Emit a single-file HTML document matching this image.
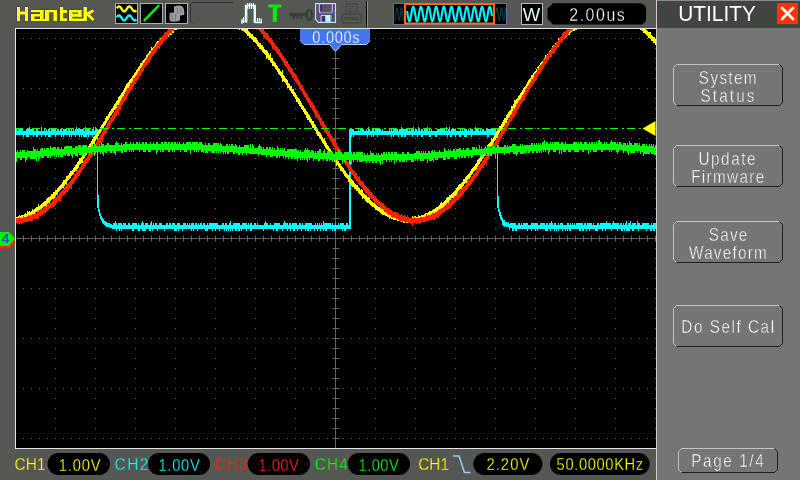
<!DOCTYPE html>
<html><head><meta charset="utf-8">
<style>
html,body{margin:0;padding:0;background:#555753;}
body{width:800px;height:480px;overflow:hidden;position:relative;font-family:"Liberation Sans",sans-serif;}
svg{position:absolute;left:0;top:0;display:block;will-change:transform;}
text{font-family:"Liberation Sans",sans-serif;}
</style></head>
<body>
<svg width="800" height="480" viewBox="0 0 800 480">
<defs>
<clipPath id="cl"><rect x="16" y="29" width="640" height="419"/></clipPath>
<filter id="blur1" x="-30%" y="-30%" width="160%" height="160%"><feGaussianBlur stdDeviation="0.7"/></filter>
</defs>
<rect x="0" y="0" width="800" height="480" fill="#555753"/>
<g shape-rendering="crispEdges">
<rect x="15" y="28" width="641" height="421" fill="#e4e4e4"/>
<rect x="16" y="29" width="640" height="419" fill="#000"/>
</g>
<g clip-path="url(#cl)">
<path d="M23 38h1v1h-1zM23 88h1v1h-1zM23 138h1v1h-1zM23 188h1v1h-1zM23 288h1v1h-1zM23 338h1v1h-1zM23 388h1v1h-1zM23 438h1v1h-1zM31 38h1v1h-1zM31 88h1v1h-1zM31 138h1v1h-1zM31 188h1v1h-1zM31 288h1v1h-1zM31 338h1v1h-1zM31 388h1v1h-1zM31 438h1v1h-1zM39 38h1v1h-1zM39 88h1v1h-1zM39 138h1v1h-1zM39 188h1v1h-1zM39 288h1v1h-1zM39 338h1v1h-1zM39 388h1v1h-1zM39 438h1v1h-1zM47 38h1v1h-1zM47 88h1v1h-1zM47 138h1v1h-1zM47 188h1v1h-1zM47 288h1v1h-1zM47 338h1v1h-1zM47 388h1v1h-1zM47 438h1v1h-1zM55 38h1v1h-1zM55 48h1v1h-1zM55 58h1v1h-1zM55 68h1v1h-1zM55 78h1v1h-1zM55 88h1v1h-1zM55 98h1v1h-1zM55 108h1v1h-1zM55 118h1v1h-1zM55 128h1v1h-1zM55 138h1v1h-1zM55 148h1v1h-1zM55 158h1v1h-1zM55 168h1v1h-1zM55 178h1v1h-1zM55 188h1v1h-1zM55 198h1v1h-1zM55 208h1v1h-1zM55 218h1v1h-1zM55 228h1v1h-1zM55 238h1v1h-1zM55 248h1v1h-1zM55 258h1v1h-1zM55 268h1v1h-1zM55 278h1v1h-1zM55 288h1v1h-1zM55 298h1v1h-1zM55 308h1v1h-1zM55 318h1v1h-1zM55 328h1v1h-1zM55 338h1v1h-1zM55 348h1v1h-1zM55 358h1v1h-1zM55 368h1v1h-1zM55 378h1v1h-1zM55 388h1v1h-1zM55 398h1v1h-1zM55 408h1v1h-1zM55 418h1v1h-1zM55 428h1v1h-1zM55 438h1v1h-1zM63 38h1v1h-1zM63 88h1v1h-1zM63 138h1v1h-1zM63 188h1v1h-1zM63 288h1v1h-1zM63 338h1v1h-1zM63 388h1v1h-1zM63 438h1v1h-1zM71 38h1v1h-1zM71 88h1v1h-1zM71 138h1v1h-1zM71 188h1v1h-1zM71 288h1v1h-1zM71 338h1v1h-1zM71 388h1v1h-1zM71 438h1v1h-1zM79 38h1v1h-1zM79 88h1v1h-1zM79 138h1v1h-1zM79 188h1v1h-1zM79 288h1v1h-1zM79 338h1v1h-1zM79 388h1v1h-1zM79 438h1v1h-1zM87 38h1v1h-1zM87 88h1v1h-1zM87 138h1v1h-1zM87 188h1v1h-1zM87 288h1v1h-1zM87 338h1v1h-1zM87 388h1v1h-1zM87 438h1v1h-1zM95 38h1v1h-1zM95 48h1v1h-1zM95 58h1v1h-1zM95 68h1v1h-1zM95 78h1v1h-1zM95 88h1v1h-1zM95 98h1v1h-1zM95 108h1v1h-1zM95 118h1v1h-1zM95 128h1v1h-1zM95 138h1v1h-1zM95 148h1v1h-1zM95 158h1v1h-1zM95 168h1v1h-1zM95 178h1v1h-1zM95 188h1v1h-1zM95 198h1v1h-1zM95 208h1v1h-1zM95 218h1v1h-1zM95 228h1v1h-1zM95 238h1v1h-1zM95 248h1v1h-1zM95 258h1v1h-1zM95 268h1v1h-1zM95 278h1v1h-1zM95 288h1v1h-1zM95 298h1v1h-1zM95 308h1v1h-1zM95 318h1v1h-1zM95 328h1v1h-1zM95 338h1v1h-1zM95 348h1v1h-1zM95 358h1v1h-1zM95 368h1v1h-1zM95 378h1v1h-1zM95 388h1v1h-1zM95 398h1v1h-1zM95 408h1v1h-1zM95 418h1v1h-1zM95 428h1v1h-1zM95 438h1v1h-1zM103 38h1v1h-1zM103 88h1v1h-1zM103 138h1v1h-1zM103 188h1v1h-1zM103 288h1v1h-1zM103 338h1v1h-1zM103 388h1v1h-1zM103 438h1v1h-1zM111 38h1v1h-1zM111 88h1v1h-1zM111 138h1v1h-1zM111 188h1v1h-1zM111 288h1v1h-1zM111 338h1v1h-1zM111 388h1v1h-1zM111 438h1v1h-1zM119 38h1v1h-1zM119 88h1v1h-1zM119 138h1v1h-1zM119 188h1v1h-1zM119 288h1v1h-1zM119 338h1v1h-1zM119 388h1v1h-1zM119 438h1v1h-1zM127 38h1v1h-1zM127 88h1v1h-1zM127 138h1v1h-1zM127 188h1v1h-1zM127 288h1v1h-1zM127 338h1v1h-1zM127 388h1v1h-1zM127 438h1v1h-1zM135 38h1v1h-1zM135 48h1v1h-1zM135 58h1v1h-1zM135 68h1v1h-1zM135 78h1v1h-1zM135 88h1v1h-1zM135 98h1v1h-1zM135 108h1v1h-1zM135 118h1v1h-1zM135 128h1v1h-1zM135 138h1v1h-1zM135 148h1v1h-1zM135 158h1v1h-1zM135 168h1v1h-1zM135 178h1v1h-1zM135 188h1v1h-1zM135 198h1v1h-1zM135 208h1v1h-1zM135 218h1v1h-1zM135 228h1v1h-1zM135 238h1v1h-1zM135 248h1v1h-1zM135 258h1v1h-1zM135 268h1v1h-1zM135 278h1v1h-1zM135 288h1v1h-1zM135 298h1v1h-1zM135 308h1v1h-1zM135 318h1v1h-1zM135 328h1v1h-1zM135 338h1v1h-1zM135 348h1v1h-1zM135 358h1v1h-1zM135 368h1v1h-1zM135 378h1v1h-1zM135 388h1v1h-1zM135 398h1v1h-1zM135 408h1v1h-1zM135 418h1v1h-1zM135 428h1v1h-1zM135 438h1v1h-1zM143 38h1v1h-1zM143 88h1v1h-1zM143 138h1v1h-1zM143 188h1v1h-1zM143 288h1v1h-1zM143 338h1v1h-1zM143 388h1v1h-1zM143 438h1v1h-1zM151 38h1v1h-1zM151 88h1v1h-1zM151 138h1v1h-1zM151 188h1v1h-1zM151 288h1v1h-1zM151 338h1v1h-1zM151 388h1v1h-1zM151 438h1v1h-1zM159 38h1v1h-1zM159 88h1v1h-1zM159 138h1v1h-1zM159 188h1v1h-1zM159 288h1v1h-1zM159 338h1v1h-1zM159 388h1v1h-1zM159 438h1v1h-1zM167 38h1v1h-1zM167 88h1v1h-1zM167 138h1v1h-1zM167 188h1v1h-1zM167 288h1v1h-1zM167 338h1v1h-1zM167 388h1v1h-1zM167 438h1v1h-1zM175 38h1v1h-1zM175 48h1v1h-1zM175 58h1v1h-1zM175 68h1v1h-1zM175 78h1v1h-1zM175 88h1v1h-1zM175 98h1v1h-1zM175 108h1v1h-1zM175 118h1v1h-1zM175 128h1v1h-1zM175 138h1v1h-1zM175 148h1v1h-1zM175 158h1v1h-1zM175 168h1v1h-1zM175 178h1v1h-1zM175 188h1v1h-1zM175 198h1v1h-1zM175 208h1v1h-1zM175 218h1v1h-1zM175 228h1v1h-1zM175 238h1v1h-1zM175 248h1v1h-1zM175 258h1v1h-1zM175 268h1v1h-1zM175 278h1v1h-1zM175 288h1v1h-1zM175 298h1v1h-1zM175 308h1v1h-1zM175 318h1v1h-1zM175 328h1v1h-1zM175 338h1v1h-1zM175 348h1v1h-1zM175 358h1v1h-1zM175 368h1v1h-1zM175 378h1v1h-1zM175 388h1v1h-1zM175 398h1v1h-1zM175 408h1v1h-1zM175 418h1v1h-1zM175 428h1v1h-1zM175 438h1v1h-1zM183 38h1v1h-1zM183 88h1v1h-1zM183 138h1v1h-1zM183 188h1v1h-1zM183 288h1v1h-1zM183 338h1v1h-1zM183 388h1v1h-1zM183 438h1v1h-1zM191 38h1v1h-1zM191 88h1v1h-1zM191 138h1v1h-1zM191 188h1v1h-1zM191 288h1v1h-1zM191 338h1v1h-1zM191 388h1v1h-1zM191 438h1v1h-1zM199 38h1v1h-1zM199 88h1v1h-1zM199 138h1v1h-1zM199 188h1v1h-1zM199 288h1v1h-1zM199 338h1v1h-1zM199 388h1v1h-1zM199 438h1v1h-1zM207 38h1v1h-1zM207 88h1v1h-1zM207 138h1v1h-1zM207 188h1v1h-1zM207 288h1v1h-1zM207 338h1v1h-1zM207 388h1v1h-1zM207 438h1v1h-1zM215 38h1v1h-1zM215 48h1v1h-1zM215 58h1v1h-1zM215 68h1v1h-1zM215 78h1v1h-1zM215 88h1v1h-1zM215 98h1v1h-1zM215 108h1v1h-1zM215 118h1v1h-1zM215 128h1v1h-1zM215 138h1v1h-1zM215 148h1v1h-1zM215 158h1v1h-1zM215 168h1v1h-1zM215 178h1v1h-1zM215 188h1v1h-1zM215 198h1v1h-1zM215 208h1v1h-1zM215 218h1v1h-1zM215 228h1v1h-1zM215 238h1v1h-1zM215 248h1v1h-1zM215 258h1v1h-1zM215 268h1v1h-1zM215 278h1v1h-1zM215 288h1v1h-1zM215 298h1v1h-1zM215 308h1v1h-1zM215 318h1v1h-1zM215 328h1v1h-1zM215 338h1v1h-1zM215 348h1v1h-1zM215 358h1v1h-1zM215 368h1v1h-1zM215 378h1v1h-1zM215 388h1v1h-1zM215 398h1v1h-1zM215 408h1v1h-1zM215 418h1v1h-1zM215 428h1v1h-1zM215 438h1v1h-1zM223 38h1v1h-1zM223 88h1v1h-1zM223 138h1v1h-1zM223 188h1v1h-1zM223 288h1v1h-1zM223 338h1v1h-1zM223 388h1v1h-1zM223 438h1v1h-1zM231 38h1v1h-1zM231 88h1v1h-1zM231 138h1v1h-1zM231 188h1v1h-1zM231 288h1v1h-1zM231 338h1v1h-1zM231 388h1v1h-1zM231 438h1v1h-1zM239 38h1v1h-1zM239 88h1v1h-1zM239 138h1v1h-1zM239 188h1v1h-1zM239 288h1v1h-1zM239 338h1v1h-1zM239 388h1v1h-1zM239 438h1v1h-1zM247 38h1v1h-1zM247 88h1v1h-1zM247 138h1v1h-1zM247 188h1v1h-1zM247 288h1v1h-1zM247 338h1v1h-1zM247 388h1v1h-1zM247 438h1v1h-1zM255 38h1v1h-1zM255 48h1v1h-1zM255 58h1v1h-1zM255 68h1v1h-1zM255 78h1v1h-1zM255 88h1v1h-1zM255 98h1v1h-1zM255 108h1v1h-1zM255 118h1v1h-1zM255 128h1v1h-1zM255 138h1v1h-1zM255 148h1v1h-1zM255 158h1v1h-1zM255 168h1v1h-1zM255 178h1v1h-1zM255 188h1v1h-1zM255 198h1v1h-1zM255 208h1v1h-1zM255 218h1v1h-1zM255 228h1v1h-1zM255 238h1v1h-1zM255 248h1v1h-1zM255 258h1v1h-1zM255 268h1v1h-1zM255 278h1v1h-1zM255 288h1v1h-1zM255 298h1v1h-1zM255 308h1v1h-1zM255 318h1v1h-1zM255 328h1v1h-1zM255 338h1v1h-1zM255 348h1v1h-1zM255 358h1v1h-1zM255 368h1v1h-1zM255 378h1v1h-1zM255 388h1v1h-1zM255 398h1v1h-1zM255 408h1v1h-1zM255 418h1v1h-1zM255 428h1v1h-1zM255 438h1v1h-1zM263 38h1v1h-1zM263 88h1v1h-1zM263 138h1v1h-1zM263 188h1v1h-1zM263 288h1v1h-1zM263 338h1v1h-1zM263 388h1v1h-1zM263 438h1v1h-1zM271 38h1v1h-1zM271 88h1v1h-1zM271 138h1v1h-1zM271 188h1v1h-1zM271 288h1v1h-1zM271 338h1v1h-1zM271 388h1v1h-1zM271 438h1v1h-1zM279 38h1v1h-1zM279 88h1v1h-1zM279 138h1v1h-1zM279 188h1v1h-1zM279 288h1v1h-1zM279 338h1v1h-1zM279 388h1v1h-1zM279 438h1v1h-1zM287 38h1v1h-1zM287 88h1v1h-1zM287 138h1v1h-1zM287 188h1v1h-1zM287 288h1v1h-1zM287 338h1v1h-1zM287 388h1v1h-1zM287 438h1v1h-1zM295 38h1v1h-1zM295 48h1v1h-1zM295 58h1v1h-1zM295 68h1v1h-1zM295 78h1v1h-1zM295 88h1v1h-1zM295 98h1v1h-1zM295 108h1v1h-1zM295 118h1v1h-1zM295 128h1v1h-1zM295 138h1v1h-1zM295 148h1v1h-1zM295 158h1v1h-1zM295 168h1v1h-1zM295 178h1v1h-1zM295 188h1v1h-1zM295 198h1v1h-1zM295 208h1v1h-1zM295 218h1v1h-1zM295 228h1v1h-1zM295 238h1v1h-1zM295 248h1v1h-1zM295 258h1v1h-1zM295 268h1v1h-1zM295 278h1v1h-1zM295 288h1v1h-1zM295 298h1v1h-1zM295 308h1v1h-1zM295 318h1v1h-1zM295 328h1v1h-1zM295 338h1v1h-1zM295 348h1v1h-1zM295 358h1v1h-1zM295 368h1v1h-1zM295 378h1v1h-1zM295 388h1v1h-1zM295 398h1v1h-1zM295 408h1v1h-1zM295 418h1v1h-1zM295 428h1v1h-1zM295 438h1v1h-1zM303 38h1v1h-1zM303 88h1v1h-1zM303 138h1v1h-1zM303 188h1v1h-1zM303 288h1v1h-1zM303 338h1v1h-1zM303 388h1v1h-1zM303 438h1v1h-1zM311 38h1v1h-1zM311 88h1v1h-1zM311 138h1v1h-1zM311 188h1v1h-1zM311 288h1v1h-1zM311 338h1v1h-1zM311 388h1v1h-1zM311 438h1v1h-1zM319 38h1v1h-1zM319 88h1v1h-1zM319 138h1v1h-1zM319 188h1v1h-1zM319 288h1v1h-1zM319 338h1v1h-1zM319 388h1v1h-1zM319 438h1v1h-1zM327 38h1v1h-1zM327 88h1v1h-1zM327 138h1v1h-1zM327 188h1v1h-1zM327 288h1v1h-1zM327 338h1v1h-1zM327 388h1v1h-1zM327 438h1v1h-1zM335 38h1v1h-1zM335 88h1v1h-1zM335 138h1v1h-1zM335 188h1v1h-1zM335 288h1v1h-1zM335 338h1v1h-1zM335 388h1v1h-1zM335 438h1v1h-1zM343 38h1v1h-1zM343 88h1v1h-1zM343 138h1v1h-1zM343 188h1v1h-1zM343 288h1v1h-1zM343 338h1v1h-1zM343 388h1v1h-1zM343 438h1v1h-1zM351 38h1v1h-1zM351 88h1v1h-1zM351 138h1v1h-1zM351 188h1v1h-1zM351 288h1v1h-1zM351 338h1v1h-1zM351 388h1v1h-1zM351 438h1v1h-1zM359 38h1v1h-1zM359 88h1v1h-1zM359 138h1v1h-1zM359 188h1v1h-1zM359 288h1v1h-1zM359 338h1v1h-1zM359 388h1v1h-1zM359 438h1v1h-1zM367 38h1v1h-1zM367 88h1v1h-1zM367 138h1v1h-1zM367 188h1v1h-1zM367 288h1v1h-1zM367 338h1v1h-1zM367 388h1v1h-1zM367 438h1v1h-1zM375 38h1v1h-1zM375 48h1v1h-1zM375 58h1v1h-1zM375 68h1v1h-1zM375 78h1v1h-1zM375 88h1v1h-1zM375 98h1v1h-1zM375 108h1v1h-1zM375 118h1v1h-1zM375 128h1v1h-1zM375 138h1v1h-1zM375 148h1v1h-1zM375 158h1v1h-1zM375 168h1v1h-1zM375 178h1v1h-1zM375 188h1v1h-1zM375 198h1v1h-1zM375 208h1v1h-1zM375 218h1v1h-1zM375 228h1v1h-1zM375 238h1v1h-1zM375 248h1v1h-1zM375 258h1v1h-1zM375 268h1v1h-1zM375 278h1v1h-1zM375 288h1v1h-1zM375 298h1v1h-1zM375 308h1v1h-1zM375 318h1v1h-1zM375 328h1v1h-1zM375 338h1v1h-1zM375 348h1v1h-1zM375 358h1v1h-1zM375 368h1v1h-1zM375 378h1v1h-1zM375 388h1v1h-1zM375 398h1v1h-1zM375 408h1v1h-1zM375 418h1v1h-1zM375 428h1v1h-1zM375 438h1v1h-1zM383 38h1v1h-1zM383 88h1v1h-1zM383 138h1v1h-1zM383 188h1v1h-1zM383 288h1v1h-1zM383 338h1v1h-1zM383 388h1v1h-1zM383 438h1v1h-1zM391 38h1v1h-1zM391 88h1v1h-1zM391 138h1v1h-1zM391 188h1v1h-1zM391 288h1v1h-1zM391 338h1v1h-1zM391 388h1v1h-1zM391 438h1v1h-1zM399 38h1v1h-1zM399 88h1v1h-1zM399 138h1v1h-1zM399 188h1v1h-1zM399 288h1v1h-1zM399 338h1v1h-1zM399 388h1v1h-1zM399 438h1v1h-1zM407 38h1v1h-1zM407 88h1v1h-1zM407 138h1v1h-1zM407 188h1v1h-1zM407 288h1v1h-1zM407 338h1v1h-1zM407 388h1v1h-1zM407 438h1v1h-1zM415 38h1v1h-1zM415 48h1v1h-1zM415 58h1v1h-1zM415 68h1v1h-1zM415 78h1v1h-1zM415 88h1v1h-1zM415 98h1v1h-1zM415 108h1v1h-1zM415 118h1v1h-1zM415 128h1v1h-1zM415 138h1v1h-1zM415 148h1v1h-1zM415 158h1v1h-1zM415 168h1v1h-1zM415 178h1v1h-1zM415 188h1v1h-1zM415 198h1v1h-1zM415 208h1v1h-1zM415 218h1v1h-1zM415 228h1v1h-1zM415 238h1v1h-1zM415 248h1v1h-1zM415 258h1v1h-1zM415 268h1v1h-1zM415 278h1v1h-1zM415 288h1v1h-1zM415 298h1v1h-1zM415 308h1v1h-1zM415 318h1v1h-1zM415 328h1v1h-1zM415 338h1v1h-1zM415 348h1v1h-1zM415 358h1v1h-1zM415 368h1v1h-1zM415 378h1v1h-1zM415 388h1v1h-1zM415 398h1v1h-1zM415 408h1v1h-1zM415 418h1v1h-1zM415 428h1v1h-1zM415 438h1v1h-1zM423 38h1v1h-1zM423 88h1v1h-1zM423 138h1v1h-1zM423 188h1v1h-1zM423 288h1v1h-1zM423 338h1v1h-1zM423 388h1v1h-1zM423 438h1v1h-1zM431 38h1v1h-1zM431 88h1v1h-1zM431 138h1v1h-1zM431 188h1v1h-1zM431 288h1v1h-1zM431 338h1v1h-1zM431 388h1v1h-1zM431 438h1v1h-1zM439 38h1v1h-1zM439 88h1v1h-1zM439 138h1v1h-1zM439 188h1v1h-1zM439 288h1v1h-1zM439 338h1v1h-1zM439 388h1v1h-1zM439 438h1v1h-1zM447 38h1v1h-1zM447 88h1v1h-1zM447 138h1v1h-1zM447 188h1v1h-1zM447 288h1v1h-1zM447 338h1v1h-1zM447 388h1v1h-1zM447 438h1v1h-1zM455 38h1v1h-1zM455 48h1v1h-1zM455 58h1v1h-1zM455 68h1v1h-1zM455 78h1v1h-1zM455 88h1v1h-1zM455 98h1v1h-1zM455 108h1v1h-1zM455 118h1v1h-1zM455 128h1v1h-1zM455 138h1v1h-1zM455 148h1v1h-1zM455 158h1v1h-1zM455 168h1v1h-1zM455 178h1v1h-1zM455 188h1v1h-1zM455 198h1v1h-1zM455 208h1v1h-1zM455 218h1v1h-1zM455 228h1v1h-1zM455 238h1v1h-1zM455 248h1v1h-1zM455 258h1v1h-1zM455 268h1v1h-1zM455 278h1v1h-1zM455 288h1v1h-1zM455 298h1v1h-1zM455 308h1v1h-1zM455 318h1v1h-1zM455 328h1v1h-1zM455 338h1v1h-1zM455 348h1v1h-1zM455 358h1v1h-1zM455 368h1v1h-1zM455 378h1v1h-1zM455 388h1v1h-1zM455 398h1v1h-1zM455 408h1v1h-1zM455 418h1v1h-1zM455 428h1v1h-1zM455 438h1v1h-1zM463 38h1v1h-1zM463 88h1v1h-1zM463 138h1v1h-1zM463 188h1v1h-1zM463 288h1v1h-1zM463 338h1v1h-1zM463 388h1v1h-1zM463 438h1v1h-1zM471 38h1v1h-1zM471 88h1v1h-1zM471 138h1v1h-1zM471 188h1v1h-1zM471 288h1v1h-1zM471 338h1v1h-1zM471 388h1v1h-1zM471 438h1v1h-1zM479 38h1v1h-1zM479 88h1v1h-1zM479 138h1v1h-1zM479 188h1v1h-1zM479 288h1v1h-1zM479 338h1v1h-1zM479 388h1v1h-1zM479 438h1v1h-1zM487 38h1v1h-1zM487 88h1v1h-1zM487 138h1v1h-1zM487 188h1v1h-1zM487 288h1v1h-1zM487 338h1v1h-1zM487 388h1v1h-1zM487 438h1v1h-1zM495 38h1v1h-1zM495 48h1v1h-1zM495 58h1v1h-1zM495 68h1v1h-1zM495 78h1v1h-1zM495 88h1v1h-1zM495 98h1v1h-1zM495 108h1v1h-1zM495 118h1v1h-1zM495 128h1v1h-1zM495 138h1v1h-1zM495 148h1v1h-1zM495 158h1v1h-1zM495 168h1v1h-1zM495 178h1v1h-1zM495 188h1v1h-1zM495 198h1v1h-1zM495 208h1v1h-1zM495 218h1v1h-1zM495 228h1v1h-1zM495 238h1v1h-1zM495 248h1v1h-1zM495 258h1v1h-1zM495 268h1v1h-1zM495 278h1v1h-1zM495 288h1v1h-1zM495 298h1v1h-1zM495 308h1v1h-1zM495 318h1v1h-1zM495 328h1v1h-1zM495 338h1v1h-1zM495 348h1v1h-1zM495 358h1v1h-1zM495 368h1v1h-1zM495 378h1v1h-1zM495 388h1v1h-1zM495 398h1v1h-1zM495 408h1v1h-1zM495 418h1v1h-1zM495 428h1v1h-1zM495 438h1v1h-1zM503 38h1v1h-1zM503 88h1v1h-1zM503 138h1v1h-1zM503 188h1v1h-1zM503 288h1v1h-1zM503 338h1v1h-1zM503 388h1v1h-1zM503 438h1v1h-1zM511 38h1v1h-1zM511 88h1v1h-1zM511 138h1v1h-1zM511 188h1v1h-1zM511 288h1v1h-1zM511 338h1v1h-1zM511 388h1v1h-1zM511 438h1v1h-1zM519 38h1v1h-1zM519 88h1v1h-1zM519 138h1v1h-1zM519 188h1v1h-1zM519 288h1v1h-1zM519 338h1v1h-1zM519 388h1v1h-1zM519 438h1v1h-1zM527 38h1v1h-1zM527 88h1v1h-1zM527 138h1v1h-1zM527 188h1v1h-1zM527 288h1v1h-1zM527 338h1v1h-1zM527 388h1v1h-1zM527 438h1v1h-1zM535 38h1v1h-1zM535 48h1v1h-1zM535 58h1v1h-1zM535 68h1v1h-1zM535 78h1v1h-1zM535 88h1v1h-1zM535 98h1v1h-1zM535 108h1v1h-1zM535 118h1v1h-1zM535 128h1v1h-1zM535 138h1v1h-1zM535 148h1v1h-1zM535 158h1v1h-1zM535 168h1v1h-1zM535 178h1v1h-1zM535 188h1v1h-1zM535 198h1v1h-1zM535 208h1v1h-1zM535 218h1v1h-1zM535 228h1v1h-1zM535 238h1v1h-1zM535 248h1v1h-1zM535 258h1v1h-1zM535 268h1v1h-1zM535 278h1v1h-1zM535 288h1v1h-1zM535 298h1v1h-1zM535 308h1v1h-1zM535 318h1v1h-1zM535 328h1v1h-1zM535 338h1v1h-1zM535 348h1v1h-1zM535 358h1v1h-1zM535 368h1v1h-1zM535 378h1v1h-1zM535 388h1v1h-1zM535 398h1v1h-1zM535 408h1v1h-1zM535 418h1v1h-1zM535 428h1v1h-1zM535 438h1v1h-1zM543 38h1v1h-1zM543 88h1v1h-1zM543 138h1v1h-1zM543 188h1v1h-1zM543 288h1v1h-1zM543 338h1v1h-1zM543 388h1v1h-1zM543 438h1v1h-1zM551 38h1v1h-1zM551 88h1v1h-1zM551 138h1v1h-1zM551 188h1v1h-1zM551 288h1v1h-1zM551 338h1v1h-1zM551 388h1v1h-1zM551 438h1v1h-1zM559 38h1v1h-1zM559 88h1v1h-1zM559 138h1v1h-1zM559 188h1v1h-1zM559 288h1v1h-1zM559 338h1v1h-1zM559 388h1v1h-1zM559 438h1v1h-1zM567 38h1v1h-1zM567 88h1v1h-1zM567 138h1v1h-1zM567 188h1v1h-1zM567 288h1v1h-1zM567 338h1v1h-1zM567 388h1v1h-1zM567 438h1v1h-1zM575 38h1v1h-1zM575 48h1v1h-1zM575 58h1v1h-1zM575 68h1v1h-1zM575 78h1v1h-1zM575 88h1v1h-1zM575 98h1v1h-1zM575 108h1v1h-1zM575 118h1v1h-1zM575 128h1v1h-1zM575 138h1v1h-1zM575 148h1v1h-1zM575 158h1v1h-1zM575 168h1v1h-1zM575 178h1v1h-1zM575 188h1v1h-1zM575 198h1v1h-1zM575 208h1v1h-1zM575 218h1v1h-1zM575 228h1v1h-1zM575 238h1v1h-1zM575 248h1v1h-1zM575 258h1v1h-1zM575 268h1v1h-1zM575 278h1v1h-1zM575 288h1v1h-1zM575 298h1v1h-1zM575 308h1v1h-1zM575 318h1v1h-1zM575 328h1v1h-1zM575 338h1v1h-1zM575 348h1v1h-1zM575 358h1v1h-1zM575 368h1v1h-1zM575 378h1v1h-1zM575 388h1v1h-1zM575 398h1v1h-1zM575 408h1v1h-1zM575 418h1v1h-1zM575 428h1v1h-1zM575 438h1v1h-1zM583 38h1v1h-1zM583 88h1v1h-1zM583 138h1v1h-1zM583 188h1v1h-1zM583 288h1v1h-1zM583 338h1v1h-1zM583 388h1v1h-1zM583 438h1v1h-1zM591 38h1v1h-1zM591 88h1v1h-1zM591 138h1v1h-1zM591 188h1v1h-1zM591 288h1v1h-1zM591 338h1v1h-1zM591 388h1v1h-1zM591 438h1v1h-1zM599 38h1v1h-1zM599 88h1v1h-1zM599 138h1v1h-1zM599 188h1v1h-1zM599 288h1v1h-1zM599 338h1v1h-1zM599 388h1v1h-1zM599 438h1v1h-1zM607 38h1v1h-1zM607 88h1v1h-1zM607 138h1v1h-1zM607 188h1v1h-1zM607 288h1v1h-1zM607 338h1v1h-1zM607 388h1v1h-1zM607 438h1v1h-1zM615 38h1v1h-1zM615 48h1v1h-1zM615 58h1v1h-1zM615 68h1v1h-1zM615 78h1v1h-1zM615 88h1v1h-1zM615 98h1v1h-1zM615 108h1v1h-1zM615 118h1v1h-1zM615 128h1v1h-1zM615 138h1v1h-1zM615 148h1v1h-1zM615 158h1v1h-1zM615 168h1v1h-1zM615 178h1v1h-1zM615 188h1v1h-1zM615 198h1v1h-1zM615 208h1v1h-1zM615 218h1v1h-1zM615 228h1v1h-1zM615 238h1v1h-1zM615 248h1v1h-1zM615 258h1v1h-1zM615 268h1v1h-1zM615 278h1v1h-1zM615 288h1v1h-1zM615 298h1v1h-1zM615 308h1v1h-1zM615 318h1v1h-1zM615 328h1v1h-1zM615 338h1v1h-1zM615 348h1v1h-1zM615 358h1v1h-1zM615 368h1v1h-1zM615 378h1v1h-1zM615 388h1v1h-1zM615 398h1v1h-1zM615 408h1v1h-1zM615 418h1v1h-1zM615 428h1v1h-1zM615 438h1v1h-1zM623 38h1v1h-1zM623 88h1v1h-1zM623 138h1v1h-1zM623 188h1v1h-1zM623 288h1v1h-1zM623 338h1v1h-1zM623 388h1v1h-1zM623 438h1v1h-1zM631 38h1v1h-1zM631 88h1v1h-1zM631 138h1v1h-1zM631 188h1v1h-1zM631 288h1v1h-1zM631 338h1v1h-1zM631 388h1v1h-1zM631 438h1v1h-1zM639 38h1v1h-1zM639 88h1v1h-1zM639 138h1v1h-1zM639 188h1v1h-1zM639 288h1v1h-1zM639 338h1v1h-1zM639 388h1v1h-1zM639 438h1v1h-1zM647 38h1v1h-1zM647 88h1v1h-1zM647 138h1v1h-1zM647 188h1v1h-1zM647 288h1v1h-1zM647 338h1v1h-1zM647 388h1v1h-1zM647 438h1v1h-1zM655 38h1v1h-1zM655 48h1v1h-1zM655 58h1v1h-1zM655 68h1v1h-1zM655 78h1v1h-1zM655 88h1v1h-1zM655 98h1v1h-1zM655 108h1v1h-1zM655 118h1v1h-1zM655 128h1v1h-1zM655 138h1v1h-1zM655 148h1v1h-1zM655 158h1v1h-1zM655 168h1v1h-1zM655 178h1v1h-1zM655 188h1v1h-1zM655 198h1v1h-1zM655 208h1v1h-1zM655 218h1v1h-1zM655 228h1v1h-1zM655 238h1v1h-1zM655 248h1v1h-1zM655 258h1v1h-1zM655 268h1v1h-1zM655 278h1v1h-1zM655 288h1v1h-1zM655 298h1v1h-1zM655 308h1v1h-1zM655 318h1v1h-1zM655 328h1v1h-1zM655 338h1v1h-1zM655 348h1v1h-1zM655 358h1v1h-1zM655 368h1v1h-1zM655 378h1v1h-1zM655 388h1v1h-1zM655 398h1v1h-1zM655 408h1v1h-1zM655 418h1v1h-1zM655 428h1v1h-1zM655 438h1v1h-1z" fill="#626a62"/><path d="M16 238h640M335 29v419M23 235v6M31 235v6M39 235v6M47 235v6M55 235v6M63 235v6M71 235v6M79 235v6M87 235v6M95 235v6M103 235v6M111 235v6M119 235v6M127 235v6M135 235v6M143 235v6M151 235v6M159 235v6M167 235v6M175 235v6M183 235v6M191 235v6M199 235v6M207 235v6M215 235v6M223 235v6M231 235v6M239 235v6M247 235v6M255 235v6M263 235v6M271 235v6M279 235v6M287 235v6M295 235v6M303 235v6M311 235v6M319 235v6M327 235v6M343 235v6M351 235v6M359 235v6M367 235v6M375 235v6M383 235v6M391 235v6M399 235v6M407 235v6M415 235v6M423 235v6M431 235v6M439 235v6M447 235v6M455 235v6M463 235v6M471 235v6M479 235v6M487 235v6M495 235v6M503 235v6M511 235v6M519 235v6M527 235v6M535 235v6M543 235v6M551 235v6M559 235v6M567 235v6M575 235v6M583 235v6M591 235v6M599 235v6M607 235v6M615 235v6M623 235v6M631 235v6M639 235v6M647 235v6M655 235v6M332 38h7M332 48h7M332 58h7M332 68h7M332 78h7M332 88h7M332 98h7M332 108h7M332 118h7M332 128h7M332 138h7M332 148h7M332 158h7M332 168h7M332 178h7M332 188h7M332 198h7M332 208h7M332 218h7M332 228h7M332 248h7M332 258h7M332 268h7M332 278h7M332 288h7M332 298h7M332 308h7M332 318h7M332 328h7M332 338h7M332 348h7M332 358h7M332 368h7M332 378h7M332 388h7M332 398h7M332 408h7M332 418h7M332 428h7M332 438h7" stroke="#626662" stroke-width="1" fill="none" transform="translate(0.5 0.5)"/>
<g shape-rendering="crispEdges" stroke-width="1" fill="none">
<path d="M16.5 129V135M17.5 131V135M18.5 129V135M19.5 129V135M20.5 129V135M21.5 129V135M22.5 129V135M23.5 131V137M24.5 131V135M25.5 131V135M26.5 129V137M27.5 129V137M28.5 129V137M29.5 127V135M30.5 129V135M31.5 129V135M32.5 129V135M33.5 129V137M34.5 131V135M35.5 131V135M36.5 129V137M37.5 129V137M38.5 131V135M39.5 131V135M40.5 131V135M41.5 127V137M42.5 131V135M43.5 131V135M44.5 129V135M45.5 131V137M46.5 129V135M47.5 131V135M48.5 129V137M49.5 129V137M50.5 131V137M51.5 129V135M52.5 129V135M53.5 129V135M54.5 129V135M55.5 129V137M56.5 131V135M57.5 129V135M58.5 129V135M59.5 131V135M60.5 129V135M61.5 129V137M62.5 131V135M63.5 129V137M64.5 129V135M65.5 129V135M66.5 129V135M67.5 131V135M68.5 129V135M69.5 129V137M70.5 131V135M71.5 129V137M72.5 131V135M73.5 129V135M74.5 131V135M75.5 129V137M76.5 127V135M77.5 129V135M78.5 129V135M79.5 129V137M80.5 129V135M81.5 129V137M82.5 129V135M83.5 129V137M84.5 131V137M85.5 127V137M86.5 129V137M87.5 129V135M88.5 129V137M89.5 129V135M90.5 131V135M91.5 131V135M92.5 129V137M93.5 127V135M94.5 131V135M95.5 127V135M96.5 129V135M97.5 129V208M98.5 195V212M99.5 209V216M100.5 213V219M101.5 216V221M102.5 218V223M103.5 219V224M104.5 221V225M105.5 221V226M106.5 222V227M107.5 223V227M108.5 223V227M109.5 223V228M110.5 224V228M111.5 224V228M112.5 225V229M113.5 223V229M114.5 223V229M115.5 221V229M116.5 223V231M117.5 225V229M118.5 223V229M119.5 223V231M120.5 223V229M121.5 223V231M122.5 225V229M123.5 223V229M124.5 223V229M125.5 223V229M126.5 225V229M127.5 225V229M128.5 223V229M129.5 223V229M130.5 225V229M131.5 225V229M132.5 223V231M133.5 223V231M134.5 223V229M135.5 223V229M136.5 223V229M137.5 225V229M138.5 223V231M139.5 225V231M140.5 225V229M141.5 223V229M142.5 221V231M143.5 223V231M144.5 225V231M145.5 223V231M146.5 223V229M147.5 223V229M148.5 225V229M149.5 225V231M150.5 223V231M151.5 221V229M152.5 225V231M153.5 223V229M154.5 225V229M155.5 223V229M156.5 223V229M157.5 225V231M158.5 225V229M159.5 223V229M160.5 223V229M161.5 223V229M162.5 225V229M163.5 225V229M164.5 225V231M165.5 225V229M166.5 223V229M167.5 223V229M168.5 225V229M169.5 223V229M170.5 223V229M171.5 225V229M172.5 223V229M173.5 223V229M174.5 223V231M175.5 225V231M176.5 225V231M177.5 223V229M178.5 223V231M179.5 223V229M180.5 225V229M181.5 225V229M182.5 225V231M183.5 223V229M184.5 223V229M185.5 223V229M186.5 225V229M187.5 223V229M188.5 225V229M189.5 223V229M190.5 225V229M191.5 223V231M192.5 223V229M193.5 223V231M194.5 225V229M195.5 223V229M196.5 223V229M197.5 225V231M198.5 223V229M199.5 225V229M200.5 223V229M201.5 223V229M202.5 225V229M203.5 223V229M204.5 223V229M205.5 225V231M206.5 225V231M207.5 223V231M208.5 225V229M209.5 223V229M210.5 223V229M211.5 223V229M212.5 223V231M213.5 223V229M214.5 223V229M215.5 223V231M216.5 223V229M217.5 223V229M218.5 225V229M219.5 225V231M220.5 225V229M221.5 225V229M222.5 223V229M223.5 223V229M224.5 225V231M225.5 223V229M226.5 223V231M227.5 225V229M228.5 225V231M229.5 223V229M230.5 221V231M231.5 225V229M232.5 225V231M233.5 223V229M234.5 223V229M235.5 223V231M236.5 223V231M237.5 223V229M238.5 223V231M239.5 223V231M240.5 225V229M241.5 225V231M242.5 223V229M243.5 223V229M244.5 223V229M245.5 223V229M246.5 223V231M247.5 225V229M248.5 223V229M249.5 225V229M250.5 223V231M251.5 223V231M252.5 225V229M253.5 225V229M254.5 223V229M255.5 223V229M256.5 225V229M257.5 223V229M258.5 225V229M259.5 225V229M260.5 225V229M261.5 225V229M262.5 225V229M263.5 225V231M264.5 223V229M265.5 221V229M266.5 223V229M267.5 223V229M268.5 225V229M269.5 225V229M270.5 223V229M271.5 225V229M272.5 225V229M273.5 225V231M274.5 223V229M275.5 223V229M276.5 223V231M277.5 223V231M278.5 223V229M279.5 223V229M280.5 225V229M281.5 225V229M282.5 225V231M283.5 223V229M284.5 221V229M285.5 223V229M286.5 223V229M287.5 223V231M288.5 225V229M289.5 223V229M290.5 223V231M291.5 225V229M292.5 223V229M293.5 223V231M294.5 223V231M295.5 223V229M296.5 223V229M297.5 225V231M298.5 225V229M299.5 223V229M300.5 223V229M301.5 225V231M302.5 223V229M303.5 225V229M304.5 225V229M305.5 223V231M306.5 223V229M307.5 223V231M308.5 223V231M309.5 223V229M310.5 223V231M311.5 223V229M312.5 225V229M313.5 225V229M314.5 225V231M315.5 223V229M316.5 225V229M317.5 223V231M318.5 225V229M319.5 223V229M320.5 225V231M321.5 223V229M322.5 225V229M323.5 221V231M324.5 223V229M325.5 223V231M326.5 223V231M327.5 223V229M328.5 223V229M329.5 223V229M330.5 223V229M331.5 225V229M332.5 223V231M333.5 225V229M334.5 225V231M335.5 223V231M336.5 225V229M337.5 225V229M338.5 223V229M339.5 225V229M340.5 223V229M341.5 223V229M342.5 223V231M343.5 223V229M344.5 225V231M345.5 225V231M346.5 223V229M347.5 223V229M348.5 225V229M349.5 129V229M350.5 129V229M351.5 129V137M352.5 129V135M353.5 129V137M354.5 131V135M355.5 131V135M356.5 131V135M357.5 131V135M358.5 129V135M359.5 131V135M360.5 129V135M361.5 129V135M362.5 129V135M363.5 129V135M364.5 131V135M365.5 131V135M366.5 129V135M367.5 131V137M368.5 127V135M369.5 129V135M370.5 131V135M371.5 131V137M372.5 129V135M373.5 129V137M374.5 131V135M375.5 129V135M376.5 129V135M377.5 129V137M378.5 129V135M379.5 129V135M380.5 129V135M381.5 131V135M382.5 129V135M383.5 131V135M384.5 131V135M385.5 131V135M386.5 131V135M387.5 131V135M388.5 131V135M389.5 129V135M390.5 131V135M391.5 129V137M392.5 131V135M393.5 129V137M394.5 129V135M395.5 129V135M396.5 129V135M397.5 129V135M398.5 131V137M399.5 129V135M400.5 129V135M401.5 127V137M402.5 129V137M403.5 129V135M404.5 129V137M405.5 129V137M406.5 129V135M407.5 129V135M408.5 131V135M409.5 129V135M410.5 131V135M411.5 129V135M412.5 129V137M413.5 127V135M414.5 131V135M415.5 129V135M416.5 129V135M417.5 131V137M418.5 127V135M419.5 129V135M420.5 131V135M421.5 129V137M422.5 129V137M423.5 131V135M424.5 129V135M425.5 129V135M426.5 129V135M427.5 127V135M428.5 131V135M429.5 129V137M430.5 131V137M431.5 129V135M432.5 131V135M433.5 131V135M434.5 131V135M435.5 131V137M436.5 131V137M437.5 129V135M438.5 129V135M439.5 129V135M440.5 129V135M441.5 129V135M442.5 129V135M443.5 129V135M444.5 129V135M445.5 131V135M446.5 127V135M447.5 131V137M448.5 129V135M449.5 127V135M450.5 131V137M451.5 129V137M452.5 129V135M453.5 129V135M454.5 129V135M455.5 129V137M456.5 131V135M457.5 131V135M458.5 131V135M459.5 131V137M460.5 129V137M461.5 131V135M462.5 129V135M463.5 131V135M464.5 129V137M465.5 129V137M466.5 129V137M467.5 131V135M468.5 129V135M469.5 131V135M470.5 129V135M471.5 129V137M472.5 129V135M473.5 131V135M474.5 131V135M475.5 127V135M476.5 129V135M477.5 129V135M478.5 129V135M479.5 131V135M480.5 129V135M481.5 131V135M482.5 129V135M483.5 129V135M484.5 131V135M485.5 131V135M486.5 129V135M487.5 129V137M488.5 129V137M489.5 129V135M490.5 129V135M491.5 129V135M492.5 129V135M493.5 129V135M494.5 129V135M495.5 129V137M496.5 131V135M497.5 129V208M498.5 196V212M499.5 209V216M500.5 212V219M501.5 215V221M502.5 218V225M503.5 220V226M504.5 220V227M505.5 222V226M506.5 222V227M507.5 223V227M508.5 222V227M509.5 224V230M510.5 223V228M511.5 223V228M512.5 223V231M513.5 223V231M514.5 223V229M515.5 223V231M516.5 225V231M517.5 225V229M518.5 223V229M519.5 223V229M520.5 225V229M521.5 223V229M522.5 225V229M523.5 223V229M524.5 223V229M525.5 223V229M526.5 223V229M527.5 223V231M528.5 225V229M529.5 225V229M530.5 225V229M531.5 223V231M532.5 223V229M533.5 223V229M534.5 223V229M535.5 223V231M536.5 223V229M537.5 223V231M538.5 225V229M539.5 225V229M540.5 223V229M541.5 223V229M542.5 223V229M543.5 223V229M544.5 223V229M545.5 225V231M546.5 223V231M547.5 223V231M548.5 225V229M549.5 223V229M550.5 223V231M551.5 221V229M552.5 223V229M553.5 225V229M554.5 223V231M555.5 223V229M556.5 225V231M557.5 225V229M558.5 223V231M559.5 225V229M560.5 223V229M561.5 223V229M562.5 223V231M563.5 225V229M564.5 225V229M565.5 225V231M566.5 225V229M567.5 223V231M568.5 223V229M569.5 225V231M570.5 223V231M571.5 225V229M572.5 223V229M573.5 225V229M574.5 223V229M575.5 225V229M576.5 223V229M577.5 223V229M578.5 223V229M579.5 223V231M580.5 223V231M581.5 223V229M582.5 223V231M583.5 225V231M584.5 223V229M585.5 223V229M586.5 225V231M587.5 223V229M588.5 223V229M589.5 223V231M590.5 223V229M591.5 223V229M592.5 225V229M593.5 223V229M594.5 225V229M595.5 225V231M596.5 225V231M597.5 223V231M598.5 223V229M599.5 225V229M600.5 223V229M601.5 223V229M602.5 223V231M603.5 223V229M604.5 223V229M605.5 223V231M606.5 221V229M607.5 223V229M608.5 223V229M609.5 223V229M610.5 223V229M611.5 225V231M612.5 223V229M613.5 221V229M614.5 223V229M615.5 223V229M616.5 223V229M617.5 223V231M618.5 223V229M619.5 225V229M620.5 223V229M621.5 223V231M622.5 225V231M623.5 223V229M624.5 225V231M625.5 223V229M626.5 221V231M627.5 225V231M628.5 223V231M629.5 223V231M630.5 221V229M631.5 225V229M632.5 223V231M633.5 223V231M634.5 223V229M635.5 223V229M636.5 225V229M637.5 221V229M638.5 223V231M639.5 223V229M640.5 225V229M641.5 225V229M642.5 223V229M643.5 223V229M644.5 223V229M645.5 223V229M646.5 223V231M647.5 223V229M648.5 223V229M649.5 225V229M650.5 225V231M651.5 223V231M652.5 225V229M653.5 223V231M654.5 223V231M655.5 223V229" stroke="#00ffff"/>
<path d="M16.5 217V221M17.5 217V221M18.5 216V222M19.5 215V220M20.5 216V221M21.5 215V223M22.5 215V220M23.5 215V219M24.5 214V219M25.5 213V218M26.5 214V218M27.5 211V218M28.5 212V217M29.5 211V217M30.5 212V216M31.5 211V216M32.5 209V215M33.5 210V214M34.5 209V214M35.5 208V213M36.5 207V212M37.5 207V212M38.5 204V212M39.5 206V210M40.5 205V210M41.5 204V209M42.5 203V208M43.5 202V207M44.5 201V207M45.5 201V206M46.5 199V207M47.5 198V204M48.5 197V203M49.5 197V203M50.5 196V201M51.5 194V200M52.5 194V199M53.5 192V199M54.5 192V198M55.5 190V196M56.5 190V195M57.5 188V195M58.5 187V192M59.5 186V191M60.5 185V190M61.5 184V189M62.5 182V188M63.5 180V188M64.5 180V186M65.5 179V184M66.5 176V185M67.5 176V181M68.5 175V180M69.5 173V179M70.5 171V178M71.5 171V176M72.5 170V175M73.5 168V174M74.5 167V172M75.5 165V171M76.5 164V171M77.5 162V169M78.5 161V168M79.5 158V165M80.5 158V164M81.5 157V163M82.5 155V163M83.5 153V159M84.5 152V158M85.5 151V156M86.5 149V155M87.5 148V153M88.5 146V153M89.5 144V150M90.5 143V148M91.5 141V147M92.5 139V146M93.5 137V144M94.5 136V144M95.5 135V141M96.5 133V139M97.5 132V137M98.5 130V136M99.5 129V134M100.5 127V133M101.5 125V131M102.5 124V129M103.5 122V129M104.5 121V126M105.5 118V125M106.5 116V123M107.5 116V121M108.5 114V120M109.5 112V118M110.5 111V116M111.5 109V115M112.5 108V113M113.5 106V112M114.5 104V110M115.5 103V109M116.5 101V108M117.5 100V105M118.5 97V106M119.5 96V103M120.5 95V101M121.5 93V100M122.5 92V97M123.5 90V96M124.5 88V94M125.5 86V92M126.5 84V91M127.5 83V89M128.5 82V88M129.5 80V86M130.5 79V85M131.5 78V83M132.5 76V82M133.5 75V80M134.5 73V79M135.5 72V77M136.5 70V76M137.5 69V75M138.5 67V73M139.5 66V71M140.5 63V70M141.5 63V68M142.5 61V67M143.5 60V66M144.5 59V64M145.5 58V63M146.5 55V62M147.5 54V60M148.5 53V59M149.5 51V58M150.5 51V56M151.5 47V55M152.5 48V55M153.5 47V53M154.5 46V52M155.5 44V50M156.5 42V49M157.5 41V49M158.5 41V46M159.5 39V45M160.5 38V44M161.5 37V43M162.5 37V42M163.5 36V41M164.5 35V41M165.5 34V39M166.5 33V39M167.5 31V37M168.5 30V37M169.5 30V35M170.5 29V35M171.5 28V35M172.5 27V33M173.5 25V33M174.5 26V30M175.5 25V30M176.5 24V30M177.5 22V28M178.5 23V27M179.5 21V27M180.5 20V27M181.5 20V25M182.5 20V25M183.5 20V24M184.5 20V23M185.5 20V23M186.5 20V23M187.5 20V21M188.5 20V21M190.5 20V21M191.5 20V21M227.5 20V22M228.5 20V22M229.5 20V22M230.5 20V23M231.5 20V23M232.5 20V23M233.5 20V25M234.5 20V26M235.5 21V25M236.5 21V26M237.5 21V27M238.5 23V28M239.5 23V30M240.5 24V29M241.5 24V30M242.5 26V31M243.5 26V31M244.5 27V32M245.5 28V33M246.5 29V34M247.5 29V36M248.5 31V36M249.5 32V38M250.5 33V38M251.5 34V39M252.5 34V40M253.5 36V42M254.5 37V42M255.5 37V43M256.5 38V44M257.5 40V46M258.5 42V47M259.5 43V49M260.5 43V49M261.5 45V50M262.5 45V52M263.5 47V53M264.5 49V54M265.5 50V55M266.5 50V59M267.5 51V58M268.5 53V60M269.5 55V60M270.5 53V62M271.5 58V63M272.5 58V66M273.5 61V66M274.5 62V67M275.5 63V69M276.5 65V70M277.5 66V72M278.5 68V74M279.5 69V75M280.5 71V76M281.5 72V78M282.5 70V82M283.5 75V81M284.5 76V82M285.5 78V83M286.5 79V85M287.5 80V88M288.5 83V88M289.5 84V90M290.5 86V91M291.5 86V93M292.5 89V94M293.5 89V96M294.5 92V97M295.5 93V99M296.5 95V102M297.5 97V102M298.5 98V104M299.5 99V106M300.5 101V107M301.5 103V109M302.5 105V110M303.5 106V112M304.5 108V114M305.5 109V115M306.5 111V118M307.5 112V120M308.5 114V120M309.5 115V122M310.5 117V123M311.5 119V125M312.5 121V128M313.5 121V128M314.5 124V130M315.5 125V131M316.5 127V134M317.5 129V136M318.5 131V136M319.5 132V138M320.5 133V139M321.5 135V141M322.5 137V143M323.5 139V144M324.5 138V146M325.5 141V148M326.5 143V149M327.5 145V150M328.5 146V152M329.5 148V153M330.5 149V155M331.5 151V156M332.5 152V158M333.5 154V159M334.5 155V162M335.5 157V162M336.5 158V166M337.5 160V165M338.5 161V167M339.5 163V168M340.5 164V171M341.5 166V171M342.5 167V172M343.5 168V174M344.5 170V176M345.5 171V177M346.5 173V178M347.5 174V179M348.5 175V182M349.5 176V182M350.5 178V184M351.5 179V186M352.5 180V187M353.5 181V187M354.5 183V189M355.5 184V189M356.5 185V191M357.5 185V191M358.5 187V193M359.5 188V194M360.5 190V195M361.5 189V196M362.5 190V199M363.5 193V198M364.5 194V199M365.5 195V201M366.5 195V202M367.5 197V203M368.5 197V203M369.5 198V204M370.5 200V205M371.5 201V206M372.5 202V207M373.5 203V207M374.5 201V208M375.5 204V210M376.5 205V210M377.5 206V211M378.5 207V211M379.5 207V212M380.5 208V213M381.5 209V214M382.5 209V215M383.5 210V215M384.5 210V215M385.5 210V216M386.5 211V216M387.5 212V217M388.5 212V217M389.5 212V219M390.5 213V218M391.5 214V219M392.5 215V219M393.5 215V220M394.5 215V220M395.5 216V220M396.5 215V220M397.5 215V221M398.5 217V221M399.5 217V221M400.5 216V221M401.5 217V222M402.5 217V221M403.5 216V223M404.5 218V223M405.5 217V222M406.5 218V223M407.5 218V223M408.5 218V223M409.5 218V223M410.5 218V222M411.5 218V222M412.5 216V222M413.5 217V223M414.5 216V221M415.5 216V221M416.5 217V221M417.5 217V221M418.5 215V221M419.5 216V220M420.5 216V220M421.5 215V220M422.5 215V219M423.5 215V219M424.5 214V220M425.5 213V218M426.5 213V218M427.5 213V217M428.5 212V217M429.5 211V217M430.5 211V216M431.5 211V216M432.5 210V216M433.5 209V214M434.5 209V213M435.5 208V213M436.5 207V212M437.5 207V212M438.5 206V211M439.5 205V210M440.5 203V209M441.5 202V208M442.5 203V208M443.5 202V207M444.5 201V208M445.5 200V205M446.5 198V204M447.5 197V203M448.5 197V203M449.5 195V201M450.5 195V200M451.5 194V200M452.5 193V198M453.5 192V198M454.5 191V196M455.5 190V196M456.5 188V195M457.5 187V194M458.5 185V191M459.5 184V190M460.5 184V189M461.5 183V189M462.5 182V187M463.5 179V186M464.5 179V184M465.5 177V183M466.5 176V183M467.5 175V180M468.5 174V179M469.5 173V179M470.5 171V177M471.5 169V175M472.5 168V174M473.5 167V172M474.5 166V171M475.5 164V170M476.5 163V169M477.5 160V167M478.5 159V165M479.5 158V164M480.5 157V162M481.5 154V161M482.5 154V159M483.5 151V158M484.5 150V156M485.5 149V156M486.5 148V153M487.5 145V152M488.5 144V150M489.5 143V149M490.5 142V147M491.5 138V146M492.5 139V145M493.5 137V143M494.5 135V141M495.5 133V140M496.5 132V138M497.5 131V136M498.5 128V135M499.5 126V133M500.5 126V131M501.5 124V130M502.5 122V129M503.5 120V127M504.5 118V125M505.5 118V123M506.5 115V123M507.5 114V120M508.5 112V118M509.5 111V117M510.5 110V115M511.5 106V115M512.5 106V112M513.5 104V110M514.5 100V109M515.5 100V107M516.5 99V105M517.5 98V104M518.5 96V102M519.5 95V101M520.5 93V99M521.5 92V97M522.5 90V97M523.5 88V96M524.5 87V93M525.5 86V91M526.5 84V90M527.5 82V88M528.5 80V87M529.5 79V87M530.5 78V84M531.5 75V82M532.5 75V81M533.5 73V79M534.5 72V77M535.5 71V76M536.5 69V75M537.5 67V73M538.5 66V73M539.5 65V71M540.5 63V69M541.5 62V68M542.5 61V66M543.5 59V65M544.5 58V64M545.5 55V62M546.5 55V60M547.5 54V59M548.5 53V58M549.5 51V58M550.5 50V55M551.5 49V55M552.5 46V53M553.5 45V52M554.5 45V50M555.5 43V49M556.5 43V48M557.5 41V47M558.5 38V47M559.5 39V44M560.5 37V43M561.5 37V43M562.5 36V42M563.5 34V40M564.5 34V39M565.5 33V38M566.5 32V37M567.5 31V36M568.5 30V35M569.5 29V35M570.5 28V33M571.5 26V32M572.5 27V31M573.5 26V31M574.5 25V31M575.5 24V30M576.5 23V30M577.5 23V28M578.5 21V27M579.5 21V27M580.5 20V25M581.5 20V25M582.5 20V24M583.5 20V23M584.5 20V23M585.5 20V22M586.5 20V23M587.5 20V21M588.5 20V21M590.5 20V21M627.5 20V21M628.5 20V21M629.5 20V25M630.5 20V23M631.5 20V23M632.5 20V24M633.5 20V24M634.5 20V26M635.5 21V26M636.5 21V27M637.5 23V28M638.5 22V29M639.5 24V29M640.5 24V30M641.5 25V30M642.5 25V31M643.5 26V33M644.5 28V33M645.5 28V34M646.5 30V35M647.5 31V36M648.5 32V38M649.5 32V38M650.5 32V39M651.5 35V41M652.5 36V41M653.5 37V43M654.5 37V43M655.5 39V45" stroke="#ffff00"/>
<path d="M16.5 218V223M17.5 218V224M18.5 218V223M19.5 217V224M20.5 218V223M21.5 218V224M22.5 218V223M23.5 216V223M24.5 217V222M25.5 217V222M26.5 217V222M27.5 216V222M28.5 215V221M29.5 216V221M30.5 215V221M31.5 215V221M32.5 214V221M33.5 214V219M34.5 214V219M35.5 212V219M36.5 213V219M37.5 211V218M38.5 211V219M39.5 211V216M40.5 209V216M41.5 209V215M42.5 209V215M43.5 208V214M44.5 206V213M45.5 206V213M46.5 206V212M47.5 205V211M48.5 204V210M49.5 203V209M50.5 203V208M51.5 202V208M52.5 201V207M53.5 199V207M54.5 198V206M55.5 196V205M56.5 197V203M57.5 194V203M58.5 195V201M59.5 193V201M60.5 192V202M61.5 191V198M62.5 190V196M63.5 189V195M64.5 187V195M65.5 186V194M66.5 186V192M67.5 184V192M68.5 183V190M69.5 182V189M70.5 181V188M71.5 179V188M72.5 178V184M73.5 177V184M74.5 174V182M75.5 174V180M76.5 172V179M77.5 171V178M78.5 170V176M79.5 168V176M80.5 167V173M81.5 164V172M82.5 164V170M83.5 161V169M84.5 160V167M85.5 158V166M86.5 158V164M87.5 156V163M88.5 154V162M89.5 153V160M90.5 152V158M91.5 150V157M92.5 147V156M93.5 146V155M94.5 145V152M95.5 144V150M96.5 142V150M97.5 140V148M98.5 138V145M99.5 137V144M100.5 135V143M101.5 134V140M102.5 132V142M103.5 130V137M104.5 129V135M105.5 127V134M106.5 125V133M107.5 123V130M108.5 121V130M109.5 120V128M110.5 118V125M111.5 117V123M112.5 115V122M113.5 113V121M114.5 112V119M115.5 109V117M116.5 108V116M117.5 106V113M118.5 105V115M119.5 103V110M120.5 101V110M121.5 99V106M122.5 98V105M123.5 96V103M124.5 95V101M125.5 93V100M126.5 90V99M127.5 88V96M128.5 88V94M129.5 86V93M130.5 83V91M131.5 83V90M132.5 81V89M133.5 78V87M134.5 78V84M135.5 76V84M136.5 75V82M137.5 73V80M138.5 71V79M139.5 70V76M140.5 68V76M141.5 67V73M142.5 65V72M143.5 63V71M144.5 62V68M145.5 60V67M146.5 59V65M147.5 57V65M148.5 55V63M149.5 54V62M150.5 53V60M151.5 51V58M152.5 50V56M153.5 48V55M154.5 47V54M155.5 46V53M156.5 44V51M157.5 43V49M158.5 42V48M159.5 39V49M160.5 39V46M161.5 37V45M162.5 36V44M163.5 35V41M164.5 33V41M165.5 32V40M166.5 32V39M167.5 30V37M168.5 29V35M169.5 28V34M170.5 27V33M171.5 26V34M172.5 25V31M173.5 24V31M174.5 22V29M175.5 21V28M176.5 20V27M177.5 20V27M178.5 20V25M179.5 20V24M180.5 20V23M181.5 20V22M182.5 20V21M184.5 20V21M249.5 20V21M250.5 20V23M251.5 20V23M252.5 20V24M253.5 20V25M254.5 20V27M255.5 21V27M256.5 22V30M257.5 22V29M258.5 24V30M259.5 25V31M260.5 26V32M261.5 27V34M262.5 27V34M263.5 28V37M264.5 31V38M265.5 32V39M266.5 33V40M267.5 33V40M268.5 35V42M269.5 37V43M270.5 38V44M271.5 38V46M272.5 40V49M273.5 42V48M274.5 43V50M275.5 45V51M276.5 46V53M277.5 47V54M278.5 49V55M279.5 49V57M280.5 52V58M281.5 53V60M282.5 55V61M283.5 56V63M284.5 58V65M285.5 59V66M286.5 61V67M287.5 61V69M288.5 64V71M289.5 65V72M290.5 67V74M291.5 68V75M292.5 69V78M293.5 72V78M294.5 73V80M295.5 74V82M296.5 75V83M297.5 78V85M298.5 79V86M299.5 81V89M300.5 83V90M301.5 85V91M302.5 85V93M303.5 88V95M304.5 90V97M305.5 92V98M306.5 93V100M307.5 95V102M308.5 97V103M309.5 98V105M310.5 100V107M311.5 102V108M312.5 102V110M313.5 105V112M314.5 106V114M315.5 109V118M316.5 110V117M317.5 111V119M318.5 114V120M319.5 115V122M320.5 117V125M321.5 118V126M322.5 121V128M323.5 121V130M324.5 124V132M325.5 125V133M326.5 127V134M327.5 129V136M328.5 131V137M329.5 130V139M330.5 134V141M331.5 136V142M332.5 137V145M333.5 138V146M334.5 139V147M335.5 142V149M336.5 143V151M337.5 146V152M338.5 147V154M339.5 148V156M340.5 150V157M341.5 152V159M342.5 153V160M343.5 154V162M344.5 156V163M345.5 157V165M346.5 160V166M347.5 161V168M348.5 162V170M349.5 164V172M350.5 165V172M351.5 167V174M352.5 169V175M353.5 170V176M354.5 171V179M355.5 173V179M356.5 173V181M357.5 176V182M358.5 177V184M359.5 176V185M360.5 180V186M361.5 181V187M362.5 181V188M363.5 182V190M364.5 185V191M365.5 186V193M366.5 187V194M367.5 188V194M368.5 189V196M369.5 190V198M370.5 192V198M371.5 192V199M372.5 193V200M373.5 195V201M374.5 196V203M375.5 197V203M376.5 198V204M377.5 199V205M378.5 200V206M379.5 201V207M380.5 202V208M381.5 203V209M382.5 203V209M383.5 203V210M384.5 205V212M385.5 206V212M386.5 207V213M387.5 208V214M388.5 208V215M389.5 209V215M390.5 210V215M391.5 210V217M392.5 211V218M393.5 212V217M394.5 212V218M395.5 212V218M396.5 212V219M397.5 213V219M398.5 213V220M399.5 215V221M400.5 215V222M401.5 214V221M402.5 215V222M403.5 216V221M404.5 215V222M405.5 216V222M406.5 217V222M407.5 215V222M408.5 217V223M409.5 218V223M410.5 218V223M411.5 218V224M412.5 218V226M413.5 218V223M414.5 217V223M415.5 218V223M416.5 218V224M417.5 218V223M418.5 218V223M419.5 218V224M420.5 217V223M421.5 217V223M422.5 217V222M423.5 217V222M424.5 217V222M425.5 216V222M426.5 214V221M427.5 216V221M428.5 215V221M429.5 215V220M430.5 215V220M431.5 214V220M432.5 213V219M433.5 213V220M434.5 213V220M435.5 212V219M436.5 212V217M437.5 211V217M438.5 210V218M439.5 209V216M440.5 209V215M441.5 208V214M442.5 208V213M443.5 207V213M444.5 206V212M445.5 205V211M446.5 204V210M447.5 204V210M448.5 203V209M449.5 202V209M450.5 201V208M451.5 198V206M452.5 199V205M453.5 198V204M454.5 196V203M455.5 196V202M456.5 195V201M457.5 193V200M458.5 193V200M459.5 191V198M460.5 190V197M461.5 189V196M462.5 188V195M463.5 187V194M464.5 186V192M465.5 185V191M466.5 183V190M467.5 180V189M468.5 180V187M469.5 180V186M470.5 179V185M471.5 177V184M472.5 176V182M473.5 174V182M474.5 173V179M475.5 172V178M476.5 169V177M477.5 168V176M478.5 166V174M479.5 165V172M480.5 164V171M481.5 163V169M482.5 161V168M483.5 160V168M484.5 158V165M485.5 157V163M486.5 155V165M487.5 154V160M488.5 152V159M489.5 151V157M490.5 149V156M491.5 146V156M492.5 145V152M493.5 143V153M494.5 143V150M495.5 141V150M496.5 139V146M497.5 138V145M498.5 136V144M499.5 134V141M500.5 133V139M501.5 130V138M502.5 129V136M503.5 128V134M504.5 125V133M505.5 124V131M506.5 123V131M507.5 121V128M508.5 119V126M509.5 117V124M510.5 116V122M511.5 114V121M512.5 111V119M513.5 108V117M514.5 109V117M515.5 107V115M516.5 104V113M517.5 103V110M518.5 101V109M519.5 100V107M520.5 99V105M521.5 97V104M522.5 95V102M523.5 94V101M524.5 92V100M525.5 89V97M526.5 88V95M527.5 86V93M528.5 85V92M529.5 83V90M530.5 82V88M531.5 79V87M532.5 79V85M533.5 77V84M534.5 74V82M535.5 73V81M536.5 72V80M537.5 68V77M538.5 69V75M539.5 66V74M540.5 65V73M541.5 64V71M542.5 63V70M543.5 59V68M544.5 59V66M545.5 58V64M546.5 55V63M547.5 55V61M548.5 53V60M549.5 52V58M550.5 51V57M551.5 48V57M552.5 47V54M553.5 46V53M554.5 45V53M555.5 44V51M556.5 42V49M557.5 41V47M558.5 40V46M559.5 38V45M560.5 37V43M561.5 36V43M562.5 33V42M563.5 32V40M564.5 32V39M565.5 31V37M566.5 30V36M567.5 28V36M568.5 27V34M569.5 25V32M570.5 25V31M571.5 23V31M572.5 22V30M573.5 21V28M574.5 21V27M575.5 20V26M576.5 20V25M577.5 20V26M578.5 20V23M579.5 20V22M580.5 20V22M582.5 20V21M647.5 20V21M648.5 20V23M649.5 20V24M650.5 20V23M651.5 20V25M652.5 20V26M653.5 20V26M654.5 20V27M655.5 21V28" stroke="#ff2000"/>
<path d="M16.5 152V162M17.5 150V158M18.5 152V158M19.5 152V158M20.5 150V160M21.5 152V160M22.5 150V158M23.5 150V158M24.5 150V158M25.5 152V162M26.5 152V160M27.5 150V158M28.5 151V157M29.5 151V157M30.5 151V159M31.5 151V159M32.5 151V159M33.5 147V159M34.5 149V159M35.5 149V159M36.5 151V161M37.5 149V157M38.5 151V161M39.5 151V159M40.5 149V157M41.5 148V158M42.5 148V158M43.5 150V158M44.5 148V156M45.5 150V156M46.5 148V156M47.5 148V158M48.5 148V158M49.5 150V156M50.5 146V158M51.5 148V156M52.5 148V156M53.5 147V155M54.5 147V157M55.5 147V155M56.5 149V157M57.5 147V155M58.5 147V157M59.5 149V155M60.5 149V157M61.5 147V157M62.5 149V157M63.5 149V155M64.5 147V155M65.5 146V156M66.5 146V154M67.5 146V156M68.5 146V156M69.5 146V156M70.5 146V154M71.5 146V156M72.5 148V158M73.5 148V154M74.5 148V154M75.5 146V156M76.5 146V156M77.5 147V157M78.5 145V153M79.5 145V155M80.5 145V155M81.5 147V155M82.5 145V155M83.5 145V153M84.5 145V155M85.5 145V153M86.5 145V153M87.5 147V153M88.5 147V153M89.5 147V155M90.5 147V153M91.5 144V154M92.5 146V152M93.5 146V152M94.5 144V156M95.5 144V154M96.5 146V152M97.5 146V152M98.5 146V152M99.5 144V152M100.5 146V154M101.5 142V152M102.5 144V154M103.5 144V156M104.5 146V152M105.5 145V153M106.5 145V153M107.5 143V151M108.5 143V151M109.5 145V151M110.5 145V153M111.5 145V153M112.5 145V151M113.5 145V153M114.5 145V153M115.5 143V155M116.5 141V151M117.5 143V151M118.5 143V151M119.5 145V151M120.5 145V151M121.5 143V153M122.5 145V153M123.5 144V150M124.5 144V152M125.5 142V152M126.5 142V152M127.5 144V150M128.5 144V150M129.5 144V152M130.5 142V150M131.5 144V152M132.5 144V150M133.5 142V152M134.5 144V150M135.5 144V150M136.5 142V150M137.5 142V150M138.5 144V150M139.5 142V152M140.5 144V150M141.5 144V150M142.5 142V150M143.5 142V152M144.5 144V152M145.5 142V152M146.5 142V150M147.5 144V150M148.5 144V152M149.5 144V152M150.5 142V152M151.5 144V150M152.5 144V150M153.5 142V150M154.5 144V150M155.5 144V150M156.5 142V154M157.5 142V152M158.5 144V150M159.5 144V150M160.5 144V152M161.5 142V150M162.5 142V152M163.5 144V152M164.5 142V150M165.5 142V150M166.5 142V150M167.5 144V150M168.5 142V152M169.5 142V152M170.5 144V150M171.5 142V150M172.5 142V152M173.5 144V150M174.5 142V152M175.5 142V150M176.5 144V150M177.5 142V150M178.5 144V150M179.5 142V150M180.5 144V152M181.5 144V150M182.5 144V150M183.5 142V150M184.5 144V152M185.5 144V152M186.5 142V152M187.5 142V150M188.5 142V150M189.5 142V150M190.5 142V154M191.5 144V150M192.5 142V150M193.5 142V150M194.5 142V152M195.5 142V150M196.5 142V152M197.5 142V150M198.5 144V152M199.5 142V150M200.5 142V150M201.5 142V152M202.5 144V152M203.5 145V153M204.5 145V151M205.5 143V153M206.5 145V153M207.5 145V153M208.5 143V151M209.5 143V151M210.5 145V151M211.5 145V153M212.5 145V153M213.5 143V153M214.5 143V153M215.5 143V151M216.5 143V153M217.5 143V151M218.5 143V153M219.5 145V151M220.5 143V153M221.5 144V152M222.5 146V152M223.5 146V154M224.5 146V152M225.5 146V154M226.5 144V152M227.5 144V154M228.5 146V154M229.5 144V152M230.5 146V152M231.5 144V152M232.5 144V152M233.5 146V154M234.5 146V154M235.5 144V152M236.5 145V153M237.5 147V153M238.5 147V155M239.5 145V155M240.5 147V153M241.5 147V153M242.5 147V155M243.5 147V153M244.5 145V153M245.5 145V153M246.5 145V155M247.5 145V153M248.5 145V153M249.5 148V154M250.5 144V154M251.5 148V154M252.5 144V154M253.5 146V154M254.5 148V154M255.5 148V154M256.5 148V154M257.5 148V154M258.5 146V156M259.5 144V154M260.5 146V154M261.5 147V155M262.5 149V155M263.5 147V155M264.5 149V155M265.5 149V155M266.5 147V157M267.5 147V155M268.5 149V155M269.5 147V155M270.5 147V157M271.5 149V157M272.5 147V157M273.5 150V156M274.5 148V156M275.5 150V156M276.5 150V158M277.5 146V158M278.5 148V156M279.5 150V158M280.5 148V156M281.5 150V156M282.5 148V156M283.5 150V158M284.5 148V156M285.5 151V159M286.5 151V157M287.5 149V157M288.5 149V159M289.5 149V157M290.5 149V157M291.5 149V159M292.5 149V159M293.5 149V157M294.5 149V159M295.5 149V159M296.5 149V159M297.5 151V161M298.5 150V158M299.5 152V158M300.5 150V160M301.5 152V158M302.5 152V160M303.5 152V158M304.5 150V160M305.5 148V158M306.5 150V160M307.5 148V162M308.5 150V158M309.5 150V160M310.5 152V158M311.5 150V158M312.5 150V158M313.5 151V161M314.5 153V159M315.5 151V159M316.5 153V159M317.5 151V159M318.5 151V161M319.5 149V161M320.5 149V159M321.5 153V159M322.5 153V159M323.5 151V161M324.5 149V159M325.5 153V159M326.5 153V161M327.5 151V161M328.5 151V159M329.5 151V161M330.5 152V160M331.5 152V160M332.5 152V162M333.5 154V160M334.5 154V160M335.5 152V162M336.5 152V160M337.5 152V162M338.5 150V160M339.5 150V160M340.5 152V160M341.5 152V160M342.5 154V164M343.5 154V160M344.5 152V162M345.5 152V164M346.5 152V160M347.5 152V160M348.5 152V160M349.5 152V160M350.5 154V162M351.5 152V164M352.5 154V160M353.5 152V162M354.5 152V160M355.5 154V160M356.5 152V160M357.5 152V162M358.5 152V160M359.5 152V162M360.5 152V162M361.5 152V162M362.5 152V162M363.5 155V161M364.5 153V161M365.5 155V161M366.5 155V163M367.5 153V161M368.5 155V161M369.5 155V163M370.5 151V161M371.5 153V161M372.5 153V163M373.5 153V163M374.5 155V161M375.5 155V163M376.5 153V163M377.5 155V161M378.5 153V161M379.5 155V163M380.5 155V165M381.5 153V161M382.5 154V164M383.5 152V160M384.5 152V160M385.5 154V160M386.5 152V162M387.5 154V160M388.5 152V160M389.5 152V162M390.5 154V160M391.5 152V162M392.5 152V160M393.5 154V160M394.5 152V164M395.5 152V160M396.5 152V162M397.5 154V160M398.5 154V160M399.5 154V162M400.5 154V162M401.5 154V160M402.5 152V162M403.5 152V162M404.5 154V162M405.5 154V160M406.5 154V162M407.5 152V160M408.5 152V160M409.5 154V160M410.5 154V160M411.5 154V162M412.5 154V162M413.5 154V162M414.5 153V159M415.5 153V161M416.5 151V159M417.5 151V161M418.5 151V159M419.5 151V159M420.5 153V161M421.5 151V161M422.5 153V161M423.5 151V161M424.5 153V159M425.5 151V159M426.5 153V159M427.5 153V163M428.5 151V159M429.5 151V161M430.5 153V161M431.5 151V161M432.5 150V160M433.5 152V162M434.5 150V158M435.5 152V160M436.5 152V160M437.5 152V160M438.5 152V158M439.5 150V158M440.5 152V158M441.5 152V158M442.5 152V158M443.5 152V160M444.5 148V160M445.5 150V160M446.5 151V157M447.5 151V159M448.5 149V159M449.5 151V159M450.5 149V157M451.5 151V157M452.5 151V157M453.5 149V157M454.5 149V159M455.5 151V159M456.5 149V159M457.5 149V157M458.5 149V157M459.5 148V158M460.5 148V156M461.5 150V158M462.5 150V158M463.5 148V156M464.5 150V158M465.5 150V158M466.5 148V156M467.5 148V156M468.5 148V158M469.5 150V156M470.5 150V156M471.5 150V158M472.5 147V157M473.5 147V155M474.5 147V155M475.5 149V155M476.5 147V155M477.5 149V155M478.5 149V155M479.5 145V155M480.5 149V157M481.5 147V155M482.5 149V157M483.5 149V155M484.5 148V154M485.5 146V156M486.5 148V154M487.5 146V156M488.5 146V156M489.5 146V154M490.5 148V156M491.5 148V156M492.5 146V154M493.5 146V154M494.5 146V154M495.5 148V158M496.5 147V153M497.5 147V153M498.5 145V153M499.5 147V153M500.5 147V153M501.5 147V153M502.5 147V153M503.5 147V153M504.5 145V155M505.5 145V153M506.5 147V153M507.5 145V153M508.5 147V153M509.5 146V154M510.5 146V152M511.5 146V152M512.5 144V152M513.5 144V154M514.5 144V154M515.5 144V154M516.5 146V156M517.5 146V154M518.5 146V152M519.5 146V152M520.5 144V154M521.5 146V154M522.5 144V154M523.5 146V154M524.5 145V153M525.5 145V153M526.5 145V153M527.5 145V151M528.5 145V153M529.5 145V153M530.5 145V151M531.5 143V151M532.5 143V153M533.5 145V153M534.5 143V151M535.5 145V151M536.5 143V153M537.5 145V153M538.5 143V151M539.5 145V153M540.5 143V151M541.5 145V153M542.5 142V150M543.5 142V152M544.5 140V150M545.5 144V152M546.5 142V150M547.5 142V150M548.5 144V154M549.5 144V152M550.5 142V150M551.5 144V150M552.5 142V150M553.5 144V152M554.5 142V152M555.5 142V152M556.5 142V150M557.5 142V150M558.5 142V150M559.5 144V154M560.5 144V150M561.5 142V154M562.5 142V150M563.5 144V152M564.5 144V152M565.5 142V152M566.5 144V150M567.5 144V150M568.5 144V152M569.5 144V152M570.5 144V152M571.5 144V150M572.5 144V150M573.5 142V150M574.5 142V152M575.5 142V152M576.5 142V152M577.5 144V152M578.5 142V152M579.5 144V150M580.5 142V150M581.5 142V150M582.5 144V152M583.5 144V152M584.5 142V150M585.5 142V150M586.5 142V150M587.5 144V150M588.5 144V154M589.5 142V150M590.5 144V152M591.5 142V150M592.5 142V150M593.5 144V152M594.5 142V152M595.5 144V152M596.5 142V152M597.5 144V150M598.5 140V150M599.5 140V150M600.5 142V150M601.5 142V152M602.5 144V152M603.5 144V150M604.5 142V150M605.5 144V150M606.5 142V150M607.5 144V150M608.5 144V150M609.5 144V152M610.5 142V150M611.5 140V152M612.5 142V150M613.5 142V150M614.5 142V150M615.5 142V150M616.5 144V152M617.5 142V154M618.5 144V152M619.5 142V150M620.5 142V150M621.5 144V150M622.5 145V151M623.5 143V153M624.5 143V151M625.5 143V151M626.5 145V151M627.5 143V153M628.5 145V155M629.5 141V151M630.5 143V153M631.5 143V153M632.5 145V153M633.5 145V153M634.5 143V153M635.5 143V151M636.5 143V151M637.5 143V153M638.5 145V151M639.5 143V151M640.5 146V154M641.5 146V152M642.5 144V152M643.5 144V156M644.5 144V154M645.5 146V154M646.5 144V154M647.5 146V154M648.5 146V154M649.5 144V154M650.5 146V152M651.5 144V154M652.5 146V154M653.5 144V154M654.5 147V155M655.5 145V155" stroke="#00ff00"/>
<path d="M16 128.5H23M27 128.5H29M32 128.5H40M44 128.5H46M49 128.5H57M61 128.5H63M66 128.5H74M78 128.5H80M83 128.5H91M95 128.5H97M100 128.5H108M112 128.5H114M117 128.5H125M129 128.5H131M134 128.5H142M146 128.5H148M151 128.5H159M163 128.5H165M168 128.5H176M180 128.5H182M185 128.5H193M197 128.5H199M202 128.5H210M214 128.5H216M219 128.5H227M231 128.5H233M236 128.5H244M248 128.5H250M253 128.5H261M265 128.5H267M270 128.5H278M282 128.5H284M287 128.5H295M299 128.5H301M304 128.5H312M316 128.5H318M321 128.5H329M333 128.5H335M338 128.5H346M350 128.5H352M355 128.5H363M367 128.5H369M372 128.5H380M384 128.5H386M389 128.5H397M401 128.5H403M406 128.5H414M418 128.5H420M423 128.5H431M435 128.5H437M440 128.5H448M452 128.5H454M457 128.5H465M469 128.5H471M474 128.5H482M486 128.5H488M491 128.5H499M503 128.5H505M508 128.5H516M520 128.5H522M525 128.5H533M537 128.5H539M542 128.5H550M554 128.5H556M559 128.5H567M571 128.5H573M576 128.5H584M588 128.5H590M593 128.5H601M605 128.5H607M610 128.5H618M622 128.5H624M627 128.5H635M639 128.5H641" stroke="#00ff00" stroke-width="1" fill="none"/>
</g>
</g>
<g shape-rendering="auto">
<!-- Hantek logo -->
<g id="logo">
<g fill="#3d4068" stroke="#3d4068" stroke-width="1">
<use href="#logoShapes"/>
</g>
<g fill="#ffff00">
<g id="logoShapes">
<rect x="17" y="7" width="3" height="14"/><rect x="25" y="7" width="3" height="14"/><rect x="20" y="11.5" width="5" height="3"/>
<rect x="31" y="10" width="12.5" height="2.2"/><rect x="40" y="10" width="3.5" height="11"/><rect x="31" y="14" width="9" height="2.5"/><rect x="31" y="14" width="3.5" height="7"/><rect x="31" y="19" width="14" height="2"/>
<rect x="45" y="10" width="4" height="11"/><rect x="45" y="10" width="12" height="2.3"/><rect x="53.5" y="10" width="3.5" height="11"/>
<rect x="60" y="7" width="3.2" height="14"/><rect x="60" y="10" width="7" height="3"/><rect x="60" y="18.3" width="7" height="2.7"/>
<rect x="69" y="10" width="12.5" height="2.5"/><rect x="69" y="10" width="3.5" height="11"/><rect x="69" y="13.8" width="12.5" height="3"/><rect x="78" y="10" width="3.5" height="6.8"/><rect x="69" y="18.5" width="18" height="2.5"/>
<rect x="83.5" y="7" width="3.5" height="14"/><path d="M86 13L92.5 9.5L94.5 11.2L88.5 15.5Z"/><path d="M86 14.5L88.5 13L94.5 19.2L92.5 21Z"/>
</g>
</g>
</g>
<!-- icon boxes -->
<rect x="115.5" y="3.5" width="22" height="20" fill="#000" stroke="#b4aeb4" stroke-width="1"/>
<path d="M116.8 8.3 L117.3 7.61 L117.8 7.03 L118.3 6.62 L118.8 6.42 L119.3 6.44 L119.8 6.69 L120.3 7.13 L120.8 7.74 L121.3 8.45 L121.8 9.2 L122.3 9.93 L122.8 10.56 L123.3 11.04 L123.8 11.33 L124.3 11.4 L124.8 11.24 L125.3 10.87 L125.8 10.32 L126.3 9.64 L126.8 8.9 L127.3 8.16 L127.8 7.48 L128.3 6.93 L128.8 6.56 L129.3 6.4 L129.8 6.47 L130.3 6.76 L130.8 7.24 L131.3 7.87 L131.8 8.6 L132.3 9.35 L132.8 10.06 L133.3 10.67 L133.8 11.11 L134.3 11.36 L134.8 11.38 L135.3 11.18 L135.8 10.77 L136.3 10.19" stroke="#ffff00" stroke-width="2.4" fill="none"/>
<path d="M116.8 17.3 L117.3 16.61 L117.8 16.03 L118.3 15.62 L118.8 15.42 L119.3 15.44 L119.8 15.69 L120.3 16.13 L120.8 16.74 L121.3 17.45 L121.8 18.2 L122.3 18.93 L122.8 19.56 L123.3 20.04 L123.8 20.33 L124.3 20.4 L124.8 20.24 L125.3 19.87 L125.8 19.32 L126.3 18.64 L126.8 17.9 L127.3 17.16 L127.8 16.48 L128.3 15.93 L128.8 15.56 L129.3 15.4 L129.8 15.47 L130.3 15.76 L130.8 16.24 L131.3 16.87 L131.8 17.6 L132.3 18.35 L132.8 19.06 L133.3 19.67 L133.8 20.11 L134.3 20.36 L134.8 20.38 L135.3 20.18 L135.8 19.77 L136.3 19.19" stroke="#00ffff" stroke-width="2.4" fill="none"/>
<rect x="140.5" y="3.5" width="22" height="20" fill="#000" stroke="#b4aeb4" stroke-width="1"/>
<path d="M144.6 20.2L158.5 5.8" stroke="#00ee00" stroke-width="2.6" stroke-linecap="round"/>
<rect x="165.5" y="3.5" width="22" height="20" fill="#000" stroke="#b4aeb4" stroke-width="1"/>
<g filter="url(#blur1)">
<path d="M169.5 13.2Q171 12.3 174 12.5V6.5Q177 5 179.5 5.5Q183 5.5 184 9.5L184.5 14.5Q182.5 15.8 180 15.5V20.5Q176 22 171 21.6Q169.5 21 169.5 19Z" fill="#9c9c9c"/>
<path d="M172 14.5V20.5M175.5 14V20.5M177.5 8V14M181 8.5V13" stroke="#6e6e6e" stroke-width="0.8"/>
</g>
<path d="M233 2.5H192L190.5 4V21.8L192.5 23.5" stroke="#36343a" stroke-width="1" fill="none"/>
<!-- pulse icon -->
<g stroke="#e0ffff" fill="none">
<path d="M241 21.6H245.6V5.6H255.2V22.4H262" stroke-width="1.5"/>
<path d="M246.6 6V22.8M254.4 6V22.8" stroke-width="1.6"/>
<path d="M247.7 3V9M249.6 3V9M251.5 3V9M253.5 3V9M257.5 18V23M259.5 18V23M261.3 18.5V23M242 19V24M243.6 17V23" stroke-width="1.2"/>
</g>
<!-- T -->
<rect x="268.3" y="4.5" width="13.1" height="3" fill="#00ee00"/>
<rect x="272.8" y="7" width="4.1" height="14.8" fill="#00ee00"/>
<!-- key -->
<g fill="#3c3e3a">
<rect x="289.5" y="12.8" width="17" height="3.4"/>
<rect x="292.3" y="15" width="2.4" height="3.8"/><rect x="296.4" y="15" width="2.4" height="3.8"/><rect x="300" y="15" width="2.4" height="3.8"/>
</g>
<ellipse cx="309.3" cy="14.8" rx="2.7" ry="4.8" fill="none" stroke="#3c3e3a" stroke-width="2.6"/>
<!-- floppy -->
<g fill="none">
<path d="M315.6 3.6H335.5V22.4H318.5L315.6 19.5Z" stroke="#b8efe6" stroke-width="1.1"/>
<path d="M316.8 4.8H334.3V21.2H319L316.8 19Z" stroke="#5b47d6" stroke-width="0.8"/>
<path d="M319.3 4V11.2Q319.3 12.6 320.8 12.6H330.8Q332.3 12.6 332.3 11.2V4" stroke="#c8c0f0" stroke-width="1.1"/>
<path d="M320.4 12.2H331.2" stroke="#6a50d8" stroke-width="1"/>
<path d="M321.2 5V11" stroke="#3010b0" stroke-width="1.3"/>
<path d="M321 22V15.5H330.8V22" stroke="#c8c0f0" stroke-width="1"/>
</g>
<rect x="325.3" y="15.3" width="4.8" height="6.5" fill="#c0f8f8"/>
<rect x="322.8" y="16.4" width="1.7" height="4.6" fill="#3010b0"/>
<!-- printer -->
<g fill="none" stroke="#474945">
<rect x="346" y="3.8" width="11.3" height="9.5" stroke-width="1.5"/>
<path d="M348 6.4H355.5M348 9H355.5M348 11.6H355.5" stroke-width="1"/>
<rect x="342" y="14" width="19.2" height="8.8" rx="1.5" stroke-width="1.8"/>
</g>
<rect x="343.8" y="16.9" width="15.2" height="3" fill="#474945"/>
<!-- separator -->
<rect x="366" y="1" width="1" height="26" fill="#000"/>
<rect x="367" y="1" width="1" height="26" fill="#8e8e8e"/>
<!-- overview -->
<rect x="393.5" y="3.5" width="113" height="21" fill="#000" stroke="#6c6aa2" stroke-width="1"/>
<path d="M394.5 20.11 L394.75 20.5 L395 20.11 L395.25 18.98 L395.5 17.25 L395.75 15.13 L396 12.87 L396.25 10.75 L396.5 9.02 L396.75 7.89 L397 7.5 L397.25 7.89 L397.5 9.02 L397.75 10.75 L398 12.87 L398.25 15.13 L398.5 17.25 L398.75 18.98 L399 20.11 L399.25 20.5 L399.5 20.11 L399.75 18.98 L400 17.25 L400.25 15.13 L400.5 12.87 L400.75 10.75 L401 9.02 L401.25 7.89 L401.5 7.5 L401.75 7.89 L402 9.02 L402.25 10.75 L402.5 12.87 L402.75 15.13 L403 17.25 L403.25 18.98 L403.5 20.11 L403.75 20.5 L404 20.11M496 12.87 L496.25 10.75 L496.5 9.02 L496.75 7.89 L497 7.5 L497.25 7.89 L497.5 9.02 L497.75 10.75 L498 12.87 L498.25 15.13 L498.5 17.25 L498.75 18.98 L499 20.11 L499.25 20.5 L499.5 20.11 L499.75 18.98 L500 17.25 L500.25 15.13 L500.5 12.87 L500.75 10.75 L501 9.02 L501.25 7.89 L501.5 7.5 L501.75 7.89 L502 9.02 L502.25 10.75 L502.5 12.87 L502.75 15.13 L503 17.25 L503.25 18.98 L503.5 20.11 L503.75 20.5 L504 20.11 L504.25 18.98 L504.5 17.25 L504.75 15.13 L505 12.87 L505.25 10.75 L505.5 9.02 L505.75 7.89 L506 7.5" stroke="#0d4f50" stroke-width="1" fill="none"/>
<rect x="405" y="4" width="89" height="19.5" fill="#000" stroke="#ff6c10" stroke-width="2"/>
<path d="M407 11.02 L407.25 12.44 L407.5 13.93 L407.75 15.41 L408 16.85 L408.25 18.16 L408.5 19.29 L408.75 20.21 L409 20.86 L409.25 21.22 L409.5 21.29 L409.75 21.04 L410 20.5 L410.25 19.69 L410.5 18.63 L410.75 17.39 L411 16 L411.25 14.52 L411.5 13.03 L411.75 11.57 L412 10.22 L412.25 9.03 L412.5 8.04 L412.75 7.31 L413 6.85 L413.25 6.7 L413.5 6.85 L413.75 7.31 L414 8.04 L414.25 9.03 L414.5 10.22 L414.75 11.57 L415 13.03 L415.25 14.52 L415.5 16 L415.75 17.39 L416 18.63 L416.25 19.69 L416.5 20.5 L416.75 21.04 L417 21.29 L417.25 21.22 L417.5 20.86 L417.75 20.21 L418 19.29 L418.25 18.16 L418.5 16.85 L418.75 15.41 L419 13.93 L419.25 12.44 L419.5 11.02 L419.75 9.72 L420 8.61 L420.25 7.72 L420.5 7.09 L420.75 6.76 L421 6.72 L421.25 7 L421.5 7.57 L421.75 8.41 L422 9.48 L422.25 10.75 L422.5 12.15 L422.75 13.63 L423 15.12 L423.25 16.57 L423.5 17.91 L423.75 19.08 L424 20.04 L424.25 20.75 L424.5 21.18 L424.75 21.3 L425 21.11 L425.25 20.63 L425.5 19.87 L425.75 18.86 L426 17.65 L426.25 16.28 L426.5 14.82 L426.75 13.33 L427 11.86 L427.25 10.48 L427.5 9.25 L427.75 8.22 L428 7.43 L428.25 6.92 L428.5 6.71 L428.75 6.8 L429 7.19 L429.25 7.87 L429.5 8.81 L429.75 9.97 L430 11.29 L430.25 12.73 L430.5 14.22 L430.75 15.71 L431 17.12 L431.25 18.4 L431.5 19.49 L431.75 20.36 L432 20.96 L432.25 21.26 L432.5 21.26 L432.75 20.96 L433 20.36 L433.25 19.49 L433.5 18.4 L433.75 17.12 L434 15.71 L434.25 14.22 L434.5 12.73 L434.75 11.29 L435 9.97 L435.25 8.81 L435.5 7.87 L435.75 7.19 L436 6.8 L436.25 6.71 L436.5 6.92 L436.75 7.43 L437 8.22 L437.25 9.25 L437.5 10.48 L437.75 11.86 L438 13.33 L438.25 14.82 L438.5 16.28 L438.75 17.65 L439 18.86 L439.25 19.87 L439.5 20.63 L439.75 21.11 L440 21.3 L440.25 21.18 L440.5 20.75 L440.75 20.04 L441 19.08 L441.25 17.91 L441.5 16.57 L441.75 15.12 L442 13.63 L442.25 12.15 L442.5 10.75 L442.75 9.48 L443 8.41 L443.25 7.57 L443.5 7 L443.75 6.72 L444 6.76 L444.25 7.09 L444.5 7.72 L444.75 8.61 L445 9.72 L445.25 11.02 L445.5 12.44 L445.75 13.93 L446 15.41 L446.25 16.85 L446.5 18.16 L446.75 19.29 L447 20.21 L447.25 20.86 L447.5 21.22 L447.75 21.29 L448 21.04 L448.25 20.5 L448.5 19.69 L448.75 18.63 L449 17.39 L449.25 16 L449.5 14.52 L449.75 13.03 L450 11.57 L450.25 10.22 L450.5 9.03 L450.75 8.04 L451 7.31 L451.25 6.85 L451.5 6.7 L451.75 6.85 L452 7.31 L452.25 8.04 L452.5 9.03 L452.75 10.22 L453 11.57 L453.25 13.03 L453.5 14.52 L453.75 16 L454 17.39 L454.25 18.63 L454.5 19.69 L454.75 20.5 L455 21.04 L455.25 21.29 L455.5 21.22 L455.75 20.86 L456 20.21 L456.25 19.29 L456.5 18.16 L456.75 16.85 L457 15.41 L457.25 13.93 L457.5 12.44 L457.75 11.02 L458 9.72 L458.25 8.61 L458.5 7.72 L458.75 7.09 L459 6.76 L459.25 6.72 L459.5 7 L459.75 7.57 L460 8.41 L460.25 9.48 L460.5 10.75 L460.75 12.15 L461 13.63 L461.25 15.12 L461.5 16.57 L461.75 17.91 L462 19.08 L462.25 20.04 L462.5 20.75 L462.75 21.18 L463 21.3 L463.25 21.11 L463.5 20.63 L463.75 19.87 L464 18.86 L464.25 17.65 L464.5 16.28 L464.75 14.82 L465 13.33 L465.25 11.86 L465.5 10.48 L465.75 9.25 L466 8.22 L466.25 7.43 L466.5 6.92 L466.75 6.71 L467 6.8 L467.25 7.19 L467.5 7.87 L467.75 8.81 L468 9.97 L468.25 11.29 L468.5 12.73 L468.75 14.22 L469 15.71 L469.25 17.12 L469.5 18.4 L469.75 19.49 L470 20.36 L470.25 20.96 L470.5 21.26 L470.75 21.26 L471 20.96 L471.25 20.36 L471.5 19.49 L471.75 18.4 L472 17.12 L472.25 15.71 L472.5 14.22 L472.75 12.73 L473 11.29 L473.25 9.97 L473.5 8.81 L473.75 7.87 L474 7.19 L474.25 6.8 L474.5 6.71 L474.75 6.92 L475 7.43 L475.25 8.22 L475.5 9.25 L475.75 10.48 L476 11.86 L476.25 13.33 L476.5 14.82 L476.75 16.28 L477 17.65 L477.25 18.86 L477.5 19.87 L477.75 20.63 L478 21.11 L478.25 21.3 L478.5 21.18 L478.75 20.75 L479 20.04 L479.25 19.08 L479.5 17.91 L479.75 16.57 L480 15.12 L480.25 13.63 L480.5 12.15 L480.75 10.75 L481 9.48 L481.25 8.41 L481.5 7.57 L481.75 7 L482 6.72 L482.25 6.76 L482.5 7.09 L482.75 7.72 L483 8.61 L483.25 9.72 L483.5 11.02 L483.75 12.44 L484 13.93 L484.25 15.41 L484.5 16.85 L484.75 18.16 L485 19.29 L485.25 20.21 L485.5 20.86 L485.75 21.22 L486 21.29 L486.25 21.04 L486.5 20.5 L486.75 19.69 L487 18.63 L487.25 17.39 L487.5 16 L487.75 14.52 L488 13.03 L488.25 11.57 L488.5 10.22 L488.75 9.03 L489 8.04 L489.25 7.31 L489.5 6.85 L489.75 6.7 L490 6.85 L490.25 7.31 L490.5 8.04 L490.75 9.03 L491 10.22 L491.25 11.57 L491.5 13.03 L491.75 14.52 L492 16" stroke="#00f4ff" stroke-width="2.1" fill="none"/>
<!-- W box -->
<rect x="521.5" y="3.5" width="21" height="21" fill="#000" stroke="#c0b8c0" stroke-width="1"/>
<text x="531.6" y="20.8" font-family="Liberation Sans" font-size="19" fill="#dcfcfc" text-anchor="middle" textLength="17.5" lengthAdjust="spacingAndGlyphs">W</text>
<!-- time pill -->
<path d="M553 3.2H639C643.5 3.2 646 6 646 9.5V18.5C646 22 643.5 24.6 640 24.6H553L547.6 19V8.5Z" fill="#000"/>
<text x="597" y="21" font-family="Liberation Sans" font-size="18.5" fill="#fff" text-anchor="middle" textLength="64.5" lengthAdjust="spacing" stroke="#000" stroke-width="0.3" transform="translate(597 0) scale(0.86 1) translate(-597 0)">2.00us</text>
<!-- trigger pos marker -->
<path d="M300 29H370V40.5L366.5 44.5H341.5L335.5 51.5L329.5 44.5H304L300 40.5Z" fill="#4676ee"/>
<path d="M300 40.5L304 44.5H329.5L335.5 51.5L341.5 44.5H366.5L370 40.5" stroke="#a8d0ff" stroke-width="1" fill="none"/>
<text x="336" y="43.5" font-family="Liberation Sans" font-size="17" fill="#fff" text-anchor="middle" textLength="55" lengthAdjust="spacing" stroke="#4676ee" stroke-width="0.3" transform="translate(336 0) scale(0.86 1) translate(-336 0)">0.000s</text>
<!-- trigger level marker -->
<path d="M642.5 128.5L655.5 121V136Z" fill="#ffff00"/>
<!-- CH4 marker -->
<path d="M0 241H9L14.5 238L15 242.5L9 248.5H0Z" fill="#ff2000"/>
<path d="M0 232H9L15 238.7L9 246H0Z" fill="#00f000"/>
<text x="5.5" y="243.4" font-family="Liberation Sans" font-size="13.5" font-weight="bold" fill="#3048e8" text-anchor="middle">4</text>
</g>

<!-- right panel -->
<g shape-rendering="crispEdges">
<rect x="656" y="0" width="144" height="480" fill="#757575"/>
<rect x="656" y="0" width="1" height="480" fill="#d2cad2"/>
<rect x="657" y="0" width="143" height="1" fill="#8c8c8c"/>
<rect x="657" y="1" width="143" height="27" fill="#40453f"/>
<rect x="777" y="3" width="21" height="21" fill="#ff3300"/>
</g>
<path d="M782 8L793 19M793 8L782 19" stroke="#fff" stroke-width="2.6" stroke-linecap="round"/>
<text x="678.3" y="20.8" font-size="21.5" fill="#fff" textLength="77.5" lengthAdjust="spacingAndGlyphs">UTILITY</text>
<path d="M673.5 102.5L676.5 105.5M673.5 102.5V67.5L676.5 64.5H779.5" stroke="#c8c0c8" stroke-width="1" fill="none"/><path d="M779.5 64.5L782.5 67.5V102.5L779.5 105.5H676.5" stroke="#1e1e1e" stroke-width="1" fill="none"/>
<path d="M673.5 183.5L676.5 186.5M673.5 183.5V148.5L676.5 145.5H779.5" stroke="#c8c0c8" stroke-width="1" fill="none"/><path d="M779.5 145.5L782.5 148.5V183.5L779.5 186.5H676.5" stroke="#1e1e1e" stroke-width="1" fill="none"/>
<path d="M673.5 259.5L676.5 262.5M673.5 259.5V224.5L676.5 221.5H779.5" stroke="#c8c0c8" stroke-width="1" fill="none"/><path d="M779.5 221.5L782.5 224.5V259.5L779.5 262.5H676.5" stroke="#1e1e1e" stroke-width="1" fill="none"/>
<path d="M673.5 343.5L676.5 346.5M673.5 343.5V308.5L676.5 305.5H779.5" stroke="#c8c0c8" stroke-width="1" fill="none"/><path d="M779.5 305.5L782.5 308.5V343.5L779.5 346.5H676.5" stroke="#1e1e1e" stroke-width="1" fill="none"/>
<path d="M678.5 469.5L681.5 472.5M678.5 469.5V451.5L681.5 448.5H774.5" stroke="#c8c0c8" stroke-width="1" fill="none"/><path d="M774.5 448.5L777.5 451.5V469.5L774.5 472.5H681.5" stroke="#1e1e1e" stroke-width="1" fill="none"/>
<text x="727.7" y="84" font-size="18" fill="#fff" text-anchor="middle" textLength="67.88" lengthAdjust="spacing" stroke="#757575" stroke-width="0.45" transform="translate(727.7 0) scale(0.85 1) translate(-727.7 0)">System</text>
<text x="727.5" y="102" font-size="18" fill="#fff" text-anchor="middle" textLength="63.41" lengthAdjust="spacing" stroke="#757575" stroke-width="0.45" transform="translate(727.5 0) scale(0.85 1) translate(-727.5 0)">Status</text>
<text x="727.0" y="165" font-size="18" fill="#fff" text-anchor="middle" textLength="67.18" lengthAdjust="spacing" stroke="#757575" stroke-width="0.45" transform="translate(727.0 0) scale(0.85 1) translate(-727.0 0)">Update</text>
<text x="727.65" y="183" font-size="18" fill="#fff" text-anchor="middle" textLength="85.88" lengthAdjust="spacing" stroke="#757575" stroke-width="0.45" transform="translate(727.65 0) scale(0.85 1) translate(-727.65 0)">Firmware</text>
<text x="728.0" y="241" font-size="18" fill="#fff" text-anchor="middle" textLength="45.53" lengthAdjust="spacing" stroke="#757575" stroke-width="0.45" transform="translate(728.0 0) scale(0.85 1) translate(-728.0 0)">Save</text>
<text x="727.9" y="259" font-size="18" fill="#fff" text-anchor="middle" textLength="91.41" lengthAdjust="spacing" stroke="#757575" stroke-width="0.45" transform="translate(727.9 0) scale(0.85 1) translate(-727.9 0)">Waveform</text>
<text x="727.7" y="333" font-size="18" fill="#fff" text-anchor="middle" textLength="109.06" lengthAdjust="spacing" stroke="#757575" stroke-width="0.45" transform="translate(727.7 0) scale(0.85 1) translate(-727.7 0)">Do Self Cal</text>
<text x="727.5" y="467" font-size="18" fill="#fff" text-anchor="middle" textLength="85.18" lengthAdjust="spacing" stroke="#757575" stroke-width="0.45" transform="translate(727.5 0) scale(0.85 1) translate(-727.5 0)">Page 1/4</text>
<!-- bottom labels -->
<rect x="47.5" y="453" width="62.5" height="22" rx="11" fill="#000"/>
<rect x="148" y="453" width="62" height="22" rx="11" fill="#000"/>
<rect x="247.75" y="453" width="62.25" height="22" rx="11" fill="#000"/>
<rect x="347.75" y="453" width="62.25" height="22" rx="11" fill="#000"/>
<rect x="473.3" y="453" width="69.2" height="22" rx="11" fill="#000"/>
<rect x="549.9" y="453" width="99.8" height="22" rx="11" fill="#000"/>
<text x="30.0" y="470" font-size="16" fill="#ffff00" text-anchor="middle" textLength="32.23" lengthAdjust="spacing" stroke="#555753" stroke-width="0.25" transform="translate(30.0 0) scale(0.96 1) translate(-30.0 0)">CH1</text>
<text x="79.6" y="471" font-size="16" fill="#ffff00" text-anchor="middle" textLength="45.37" lengthAdjust="spacing" stroke="#000" stroke-width="0.25" transform="translate(79.6 0) scale(0.92 1) translate(-79.6 0)">1.00V</text>
<text x="131.5" y="470" font-size="16" fill="#00ffff" text-anchor="middle" textLength="35.21" lengthAdjust="spacing" stroke="#555753" stroke-width="0.25" transform="translate(131.5 0) scale(0.96 1) translate(-131.5 0)">CH2</text>
<text x="179.1" y="471" font-size="16" fill="#00ffff" text-anchor="middle" textLength="44.89" lengthAdjust="spacing" stroke="#000" stroke-width="0.25" transform="translate(179.1 0) scale(0.92 1) translate(-179.1 0)">1.00V</text>
<text x="231.25" y="470" font-size="16" fill="#ff2000" text-anchor="middle" textLength="34.38" lengthAdjust="spacing" stroke="#555753" stroke-width="0.25" transform="translate(231.25 0) scale(0.96 1) translate(-231.25 0)">CH3</text>
<text x="278.71" y="471" font-size="16" fill="#ff2000" text-anchor="middle" textLength="43.71" lengthAdjust="spacing" stroke="#000" stroke-width="0.25" transform="translate(278.71 0) scale(0.92 1) translate(-278.71 0)">1.00V</text>
<text x="331.25" y="470" font-size="16" fill="#00ff00" text-anchor="middle" textLength="34.38" lengthAdjust="spacing" stroke="#555753" stroke-width="0.25" transform="translate(331.25 0) scale(0.96 1) translate(-331.25 0)">CH4</text>
<text x="378.71" y="471" font-size="16" fill="#00ff00" text-anchor="middle" textLength="43.71" lengthAdjust="spacing" stroke="#000" stroke-width="0.25" transform="translate(378.71 0) scale(0.92 1) translate(-378.71 0)">1.00V</text>
<text x="433.61" y="470" font-size="16" fill="#ffff00" text-anchor="middle" textLength="32.0" lengthAdjust="spacing" stroke="#555753" stroke-width="0.25" transform="translate(433.61 0) scale(0.96 1) translate(-433.61 0)">CH1</text>
<text x="507.82" y="470.5" font-size="16" fill="#ffff00" text-anchor="middle" textLength="46.59" lengthAdjust="spacing" stroke="#000" stroke-width="0.25" transform="translate(507.82 0) scale(0.92 1) translate(-507.82 0)">2.20V</text>
<text x="599.89" y="470.5" font-size="16" fill="#ffff00" text-anchor="middle" textLength="94.12" lengthAdjust="spacing" stroke="#000" stroke-width="0.25" transform="translate(599.89 0) scale(0.92 1) translate(-599.89 0)">50.0000KHz</text>
<path d="M453 456H459L464.5 472.5H470.5" stroke="#9cc8f4" stroke-width="1.6" fill="none"/>
</svg>
</body></html>
